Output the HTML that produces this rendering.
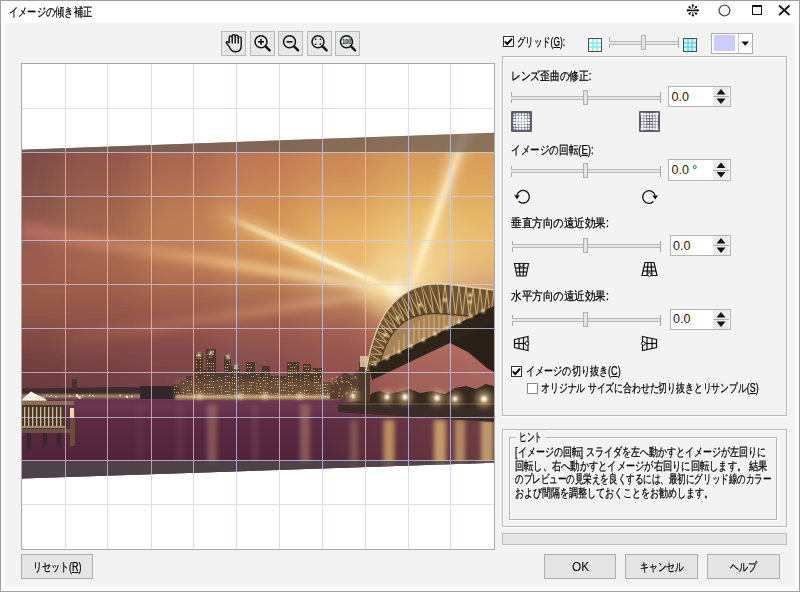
<!DOCTYPE html><html><head><meta charset="utf-8"><style>
*{margin:0;padding:0;box-sizing:border-box}
html,body{width:800px;height:592px;overflow:hidden;background:#fff}
body{position:relative;font-family:"Liberation Sans",sans-serif;font-size:12px;color:#1a1a1a}
.a{position:absolute}
.t{position:absolute;white-space:nowrap;line-height:14px;height:14px;transform-origin:0 50%;-webkit-text-stroke:0.25px currentColor}
.btn{position:absolute;background:#e5e5e5;border:1px solid #adadad}
.chk{position:absolute;width:12px;height:12px;border:1px solid #333;background:#fff}
.spin{position:absolute;background:#fff;border:1px solid #b4b4b4}
u{text-decoration:underline}
</style></head><body><div class="a" style="left:0;top:0;width:800px;height:592px;border:1px solid #a0a0a0;background:#fff"></div>
<div class="a" style="left:5px;top:23px;width:790px;height:564px;background:#f3f3f3"></div>
<div class="t" style="left:9px;top:5px;font-size:12px;color:#000;transform:scaleX(0.77);">イメージの傾き補正</div>
<svg class="a" style="left:680px;top:0" width="120" height="23" viewBox="680 0 120 23">
<g fill="#111" stroke="#111">
<line x1="694.60" y1="10.40" x2="697.80" y2="10.40" stroke-width="1.3"/>
<circle cx="697.80" cy="10.40" r="1.15" stroke="none"/>
<line x1="694.07" y1="11.67" x2="696.05" y2="13.65" stroke-width="0.9"/>
<circle cx="696.05" cy="13.65" r="1.15" stroke="none"/>
<line x1="692.80" y1="12.20" x2="692.80" y2="15.40" stroke-width="0.9"/>
<circle cx="692.80" cy="15.40" r="1.15" stroke="none"/>
<line x1="691.53" y1="11.67" x2="689.55" y2="13.65" stroke-width="0.9"/>
<circle cx="689.55" cy="13.65" r="1.15" stroke="none"/>
<line x1="691.00" y1="10.40" x2="687.80" y2="10.40" stroke-width="1.3"/>
<circle cx="687.80" cy="10.40" r="1.15" stroke="none"/>
<line x1="691.53" y1="9.13" x2="689.55" y2="7.15" stroke-width="0.9"/>
<circle cx="689.55" cy="7.15" r="1.15" stroke="none"/>
<line x1="692.80" y1="8.60" x2="692.80" y2="5.40" stroke-width="0.9"/>
<circle cx="692.80" cy="5.40" r="1.15" stroke="none"/>
<line x1="694.07" y1="9.13" x2="696.05" y2="7.15" stroke-width="0.9"/>
<circle cx="696.05" cy="7.15" r="1.15" stroke="none"/>
<line x1="687.8" y1="10.4" x2="697.8" y2="10.4" stroke-width="1.4"/>
</g>
<circle cx="724.5" cy="10.5" r="5.4" fill="none" stroke="#555" stroke-width="1.4"/>
<rect x="752.5" y="5.5" width="9" height="9" fill="none" stroke="#111" stroke-width="1"/>
<rect x="752" y="5" width="10" height="2" fill="#111"/>
<g stroke="#111" stroke-width="1.7"><line x1="779" y1="5.5" x2="789.5" y2="15"/><line x1="789.5" y1="5.5" x2="779" y2="15"/></g>
</svg>
<div class="btn" style="left:221px;top:31px;width:25px;height:25px;background:#e8e8e8;border-color:#b9b9b9"></div>
<div class="btn" style="left:249.5px;top:31px;width:25px;height:25px;background:#e8e8e8;border-color:#b9b9b9"></div>
<div class="btn" style="left:278px;top:31px;width:25px;height:25px;background:#e8e8e8;border-color:#b9b9b9"></div>
<div class="btn" style="left:306.5px;top:31px;width:25px;height:25px;background:#e8e8e8;border-color:#b9b9b9"></div>
<div class="btn" style="left:335px;top:31px;width:25px;height:25px;background:#e8e8e8;border-color:#b9b9b9"></div>
<svg class="a" style="left:215px;top:25px" width="150" height="35" viewBox="215 25 150 35">
<g fill="none" stroke="#111" stroke-width="1.4" stroke-linecap="round" stroke-linejoin="round">
<path d="M229.2,46.5 L226.8,43.8 Q225.8,42.6 226.8,41.9 Q227.9,41.3 229.2,42.8 L229.2,37.6 Q229.2,35.9 230.7,35.9 Q232.2,35.9 232.2,37.6 L232.2,36.2 Q232.2,34.6 233.7,34.6 Q235.2,34.6 235.2,36.2 L235.2,36.8 Q235.2,35.3 236.7,35.3 Q238.2,35.3 238.2,36.8 L238.2,38.3 Q238.2,36.9 239.7,36.9 Q241.2,36.9 241.2,38.3 L241.2,45.5 Q241.2,51.8 235.4,51.8 Q231.2,51.8 229.2,46.5 Z"/>
<line x1="232.2" y1="37.6" x2="232.2" y2="43"/><line x1="235.2" y1="36.5" x2="235.2" y2="43"/><line x1="238.2" y1="38" x2="238.2" y2="43"/>
</g>
<g fill="none" stroke="#111" stroke-width="1.5">
<circle cx="261" cy="41.8" r="6"/><circle cx="289.5" cy="41.8" r="6"/><circle cx="318" cy="41.8" r="6"/><circle cx="346.5" cy="41.8" r="6"/>
</g>
<g stroke="#111" stroke-width="2.4" stroke-linecap="round">
<line x1="265.6" y1="46.4" x2="269.6" y2="50.4"/><line x1="294.1" y1="46.4" x2="298.1" y2="50.4"/><line x1="322.6" y1="46.4" x2="326.6" y2="50.4"/><line x1="351.1" y1="46.4" x2="355.1" y2="50.4"/>
</g>
<g stroke="#111" stroke-width="1.6"><line x1="258" y1="41.8" x2="264" y2="41.8"/><line x1="261" y1="38.8" x2="261" y2="44.8"/>
<line x1="286.5" y1="41.8" x2="292.5" y2="41.8"/></g>
<g fill="#111"><rect x="314.8" y="38.6" width="1.5" height="1.5"/><rect x="319.7" y="38.6" width="1.5" height="1.5"/><rect x="314.8" y="43.5" width="1.5" height="1.5"/><rect x="319.7" y="43.5" width="1.5" height="1.5"/></g>
<text x="346.8" y="44.2" font-size="6.5" font-weight="bold" text-anchor="middle" fill="#111" font-family="Liberation Sans" textLength="9" lengthAdjust="spacingAndGlyphs">100</text>
</svg>
<div class="a" style="left:21px;top:63px;width:474px;height:487px;border:1px solid #a8a8a8;background:#fff"></div>
<svg class="a" style="left:22px;top:64px" width="472" height="485" viewBox="22 64 472 485">
<defs>
<filter id="sky" x="-20%" y="-20%" width="140%" height="140%"><feGaussianBlur stdDeviation="18"/></filter>
<filter id="b1" x="-50%" y="-50%" width="200%" height="200%"><feGaussianBlur stdDeviation="0.8"/></filter>
<filter id="b2" x="-50%" y="-50%" width="200%" height="200%"><feGaussianBlur stdDeviation="2"/></filter>
<filter id="b3" x="-50%" y="-50%" width="200%" height="200%"><feGaussianBlur stdDeviation="3"/></filter>
<filter id="b4" x="-50%" y="-50%" width="200%" height="200%"><feGaussianBlur stdDeviation="4"/></filter>
<filter id="b5" x="-50%" y="-50%" width="200%" height="200%"><feGaussianBlur stdDeviation="5"/></filter>
<filter id="b8" x="-50%" y="-50%" width="200%" height="200%"><feGaussianBlur stdDeviation="8"/></filter>
<linearGradient id="water" x1="0" y1="396" x2="0" y2="480" gradientUnits="userSpaceOnUse">
 <stop offset="0" stop-color="#62304a"/>
 <stop offset="0.3" stop-color="#5a2a42"/>
 <stop offset="1" stop-color="#4c2238"/>
</linearGradient>
<clipPath id="photoclip"><polygon points="0,150.5 494,132.7 494,462.8 0,479.3"/></clipPath>
</defs>
<g clip-path="url(#photoclip)">
<g filter="url(#sky)">
<rect x="-160" y="40" width="75.5" height="40.5" fill="#7a4a46"/>
<rect x="-85.0" y="40" width="71.5" height="40.5" fill="#7a4a46"/>
<rect x="-14.0" y="40" width="75.5" height="40.5" fill="#7a4a46"/>
<rect x="61.0" y="40" width="79.5" height="40.5" fill="#8c5448"/>
<rect x="140.0" y="40" width="80.5" height="40.5" fill="#a46450"/>
<rect x="220.0" y="40" width="80.5" height="40.5" fill="#bc7452"/>
<rect x="300.0" y="40" width="80.5" height="40.5" fill="#c88456"/>
<rect x="380.0" y="40" width="77.5" height="40.5" fill="#d49458"/>
<rect x="457.0" y="40" width="75.5" height="40.5" fill="#d89a58"/>
<rect x="532.0" y="40" width="73.5" height="40.5" fill="#d89a58"/>
<rect x="605.0" y="40" width="75.5" height="40.5" fill="#d89a58"/>
<rect x="-160" y="80.0" width="75.5" height="40.5" fill="#7a4a46"/>
<rect x="-85.0" y="80.0" width="71.5" height="40.5" fill="#7a4a46"/>
<rect x="-14.0" y="80.0" width="75.5" height="40.5" fill="#7a4a46"/>
<rect x="61.0" y="80.0" width="79.5" height="40.5" fill="#8c5448"/>
<rect x="140.0" y="80.0" width="80.5" height="40.5" fill="#a46450"/>
<rect x="220.0" y="80.0" width="80.5" height="40.5" fill="#bc7452"/>
<rect x="300.0" y="80.0" width="80.5" height="40.5" fill="#c88456"/>
<rect x="380.0" y="80.0" width="77.5" height="40.5" fill="#d49458"/>
<rect x="457.0" y="80.0" width="75.5" height="40.5" fill="#d89a58"/>
<rect x="532.0" y="80.0" width="73.5" height="40.5" fill="#d89a58"/>
<rect x="605.0" y="80.0" width="75.5" height="40.5" fill="#d89a58"/>
<rect x="-160" y="120.0" width="75.5" height="40.5" fill="#7a4a46"/>
<rect x="-85.0" y="120.0" width="71.5" height="40.5" fill="#7a4a46"/>
<rect x="-14.0" y="120.0" width="75.5" height="40.5" fill="#7a4a46"/>
<rect x="61.0" y="120.0" width="79.5" height="40.5" fill="#8c5448"/>
<rect x="140.0" y="120.0" width="80.5" height="40.5" fill="#a46450"/>
<rect x="220.0" y="120.0" width="80.5" height="40.5" fill="#bc7452"/>
<rect x="300.0" y="120.0" width="80.5" height="40.5" fill="#c88456"/>
<rect x="380.0" y="120.0" width="77.5" height="40.5" fill="#d49458"/>
<rect x="457.0" y="120.0" width="75.5" height="40.5" fill="#d89a58"/>
<rect x="532.0" y="120.0" width="73.5" height="40.5" fill="#d89a58"/>
<rect x="605.0" y="120.0" width="75.5" height="40.5" fill="#d89a58"/>
<rect x="-160" y="160.0" width="75.5" height="40.5" fill="#82504a"/>
<rect x="-85.0" y="160.0" width="71.5" height="40.5" fill="#82504a"/>
<rect x="-14.0" y="160.0" width="75.5" height="40.5" fill="#82504a"/>
<rect x="61.0" y="160.0" width="79.5" height="40.5" fill="#965c4c"/>
<rect x="140.0" y="160.0" width="80.5" height="40.5" fill="#b06c52"/>
<rect x="220.0" y="160.0" width="80.5" height="40.5" fill="#c47e56"/>
<rect x="300.0" y="160.0" width="80.5" height="40.5" fill="#d08e58"/>
<rect x="380.0" y="160.0" width="77.5" height="40.5" fill="#dca45c"/>
<rect x="457.0" y="160.0" width="75.5" height="40.5" fill="#dca45c"/>
<rect x="532.0" y="160.0" width="73.5" height="40.5" fill="#dca45c"/>
<rect x="605.0" y="160.0" width="75.5" height="40.5" fill="#dca45c"/>
<rect x="-160" y="200.0" width="75.5" height="40.5" fill="#8e5a4e"/>
<rect x="-85.0" y="200.0" width="71.5" height="40.5" fill="#8e5a4e"/>
<rect x="-14.0" y="200.0" width="75.5" height="40.5" fill="#8e5a4e"/>
<rect x="61.0" y="200.0" width="79.5" height="40.5" fill="#a06650"/>
<rect x="140.0" y="200.0" width="80.5" height="40.5" fill="#c08054"/>
<rect x="220.0" y="200.0" width="80.5" height="40.5" fill="#d49454"/>
<rect x="300.0" y="200.0" width="80.5" height="40.5" fill="#e2ac62"/>
<rect x="380.0" y="200.0" width="77.5" height="40.5" fill="#ecc070"/>
<rect x="457.0" y="200.0" width="75.5" height="40.5" fill="#e6b868"/>
<rect x="532.0" y="200.0" width="73.5" height="40.5" fill="#e6b868"/>
<rect x="605.0" y="200.0" width="75.5" height="40.5" fill="#e6b868"/>
<rect x="-160" y="240.0" width="75.5" height="40.5" fill="#9c5c50"/>
<rect x="-85.0" y="240.0" width="71.5" height="40.5" fill="#9c5c50"/>
<rect x="-14.0" y="240.0" width="75.5" height="40.5" fill="#9c5c50"/>
<rect x="61.0" y="240.0" width="79.5" height="40.5" fill="#a86650"/>
<rect x="140.0" y="240.0" width="80.5" height="40.5" fill="#bc7a54"/>
<rect x="220.0" y="240.0" width="80.5" height="40.5" fill="#d09258"/>
<rect x="300.0" y="240.0" width="80.5" height="40.5" fill="#ecbc70"/>
<rect x="380.0" y="240.0" width="77.5" height="40.5" fill="#f4d490"/>
<rect x="457.0" y="240.0" width="75.5" height="40.5" fill="#eac078"/>
<rect x="532.0" y="240.0" width="73.5" height="40.5" fill="#eac078"/>
<rect x="605.0" y="240.0" width="75.5" height="40.5" fill="#eac078"/>
<rect x="-160" y="280.0" width="75.5" height="40.5" fill="#9a5c4a"/>
<rect x="-85.0" y="280.0" width="71.5" height="40.5" fill="#9a5c4a"/>
<rect x="-14.0" y="280.0" width="75.5" height="40.5" fill="#9a5c4a"/>
<rect x="61.0" y="280.0" width="79.5" height="40.5" fill="#9a5a4a"/>
<rect x="140.0" y="280.0" width="80.5" height="40.5" fill="#a0604e"/>
<rect x="220.0" y="280.0" width="80.5" height="40.5" fill="#a86650"/>
<rect x="300.0" y="280.0" width="80.5" height="40.5" fill="#b87656"/>
<rect x="380.0" y="280.0" width="77.5" height="40.5" fill="#e0b078"/>
<rect x="457.0" y="280.0" width="75.5" height="40.5" fill="#c89070"/>
<rect x="532.0" y="280.0" width="73.5" height="40.5" fill="#c89070"/>
<rect x="605.0" y="280.0" width="75.5" height="40.5" fill="#c89070"/>
<rect x="-160" y="320.0" width="75.5" height="40.5" fill="#7c4642"/>
<rect x="-85.0" y="320.0" width="71.5" height="40.5" fill="#7c4642"/>
<rect x="-14.0" y="320.0" width="75.5" height="40.5" fill="#7c4642"/>
<rect x="61.0" y="320.0" width="79.5" height="40.5" fill="#864c46"/>
<rect x="140.0" y="320.0" width="80.5" height="40.5" fill="#8a4c4c"/>
<rect x="220.0" y="320.0" width="80.5" height="40.5" fill="#925450"/>
<rect x="300.0" y="320.0" width="80.5" height="40.5" fill="#9a5850"/>
<rect x="380.0" y="320.0" width="77.5" height="40.5" fill="#b06a5c"/>
<rect x="457.0" y="320.0" width="75.5" height="40.5" fill="#b06a60"/>
<rect x="532.0" y="320.0" width="73.5" height="40.5" fill="#b06a60"/>
<rect x="605.0" y="320.0" width="75.5" height="40.5" fill="#b06a60"/>
<rect x="-160" y="360.0" width="75.5" height="40.5" fill="#6c3a40"/>
<rect x="-85.0" y="360.0" width="71.5" height="40.5" fill="#6c3a40"/>
<rect x="-14.0" y="360.0" width="75.5" height="40.5" fill="#6c3a40"/>
<rect x="61.0" y="360.0" width="79.5" height="40.5" fill="#703e44"/>
<rect x="140.0" y="360.0" width="80.5" height="40.5" fill="#784248"/>
<rect x="220.0" y="360.0" width="80.5" height="40.5" fill="#804850"/>
<rect x="300.0" y="360.0" width="80.5" height="40.5" fill="#905050"/>
<rect x="380.0" y="360.0" width="77.5" height="40.5" fill="#a06058"/>
<rect x="457.0" y="360.0" width="75.5" height="40.5" fill="#a86460"/>
<rect x="532.0" y="360.0" width="73.5" height="40.5" fill="#a86460"/>
<rect x="605.0" y="360.0" width="75.5" height="40.5" fill="#a86460"/>
<rect x="-160" y="400.0" width="75.5" height="40.5" fill="#6c3a40"/>
<rect x="-85.0" y="400.0" width="71.5" height="40.5" fill="#6c3a40"/>
<rect x="-14.0" y="400.0" width="75.5" height="40.5" fill="#6c3a40"/>
<rect x="61.0" y="400.0" width="79.5" height="40.5" fill="#703e44"/>
<rect x="140.0" y="400.0" width="80.5" height="40.5" fill="#784248"/>
<rect x="220.0" y="400.0" width="80.5" height="40.5" fill="#804850"/>
<rect x="300.0" y="400.0" width="80.5" height="40.5" fill="#905050"/>
<rect x="380.0" y="400.0" width="77.5" height="40.5" fill="#a06058"/>
<rect x="457.0" y="400.0" width="75.5" height="40.5" fill="#a86460"/>
<rect x="532.0" y="400.0" width="73.5" height="40.5" fill="#a86460"/>
<rect x="605.0" y="400.0" width="75.5" height="40.5" fill="#a86460"/>
<rect x="-160" y="440.0" width="75.5" height="40.5" fill="#6c3a40"/>
<rect x="-85.0" y="440.0" width="71.5" height="40.5" fill="#6c3a40"/>
<rect x="-14.0" y="440.0" width="75.5" height="40.5" fill="#6c3a40"/>
<rect x="61.0" y="440.0" width="79.5" height="40.5" fill="#703e44"/>
<rect x="140.0" y="440.0" width="80.5" height="40.5" fill="#784248"/>
<rect x="220.0" y="440.0" width="80.5" height="40.5" fill="#804850"/>
<rect x="300.0" y="440.0" width="80.5" height="40.5" fill="#905050"/>
<rect x="380.0" y="440.0" width="77.5" height="40.5" fill="#a06058"/>
<rect x="457.0" y="440.0" width="75.5" height="40.5" fill="#a86460"/>
<rect x="532.0" y="440.0" width="73.5" height="40.5" fill="#a86460"/>
<rect x="605.0" y="440.0" width="75.5" height="40.5" fill="#a86460"/>
</g>
<linearGradient id="bur" gradientUnits="userSpaceOnUse" x1="409" y1="293" x2="473" y2="108"><stop offset="0" stop-color="#fff4c8" stop-opacity="0.8"/><stop offset="0.5" stop-color="#fff0c0" stop-opacity="0.6"/><stop offset="1" stop-color="#ffe8b0" stop-opacity="0.35"/></linearGradient>
<polygon points="411.4,293.8 482.5,111.3 463.5,104.7 406.6,292.2" fill="url(#bur)" filter="url(#b5)"/>
<linearGradient id="bur2" gradientUnits="userSpaceOnUse" x1="409" y1="293" x2="467" y2="128"><stop offset="0" stop-color="#ffffff" stop-opacity="0.9"/><stop offset="0.6" stop-color="#fff8e0" stop-opacity="0.7"/><stop offset="1" stop-color="#fff0d0" stop-opacity="0.4"/></linearGradient>
<polygon points="409.9,293.3 469.8,129.0 464.2,127.0 408.1,292.7" fill="url(#bur2)" filter="url(#b2)"/>
<linearGradient id="ba" gradientUnits="userSpaceOnUse" x1="396" y1="291" x2="205" y2="207"><stop offset="0" stop-color="#fff4c8" stop-opacity="0.9"/><stop offset="0.6" stop-color="#f8dca0" stop-opacity="0.6"/><stop offset="1" stop-color="#f0c080" stop-opacity="0"/></linearGradient>
<polygon points="397.4,287.8 209.4,196.9 200.6,217.1 394.6,294.2" fill="url(#ba)" filter="url(#b4)"/>
<linearGradient id="ba2" gradientUnits="userSpaceOnUse" x1="396" y1="291" x2="225" y2="216"><stop offset="0" stop-color="#ffffff" stop-opacity="0.95"/><stop offset="0.5" stop-color="#fff4c8" stop-opacity="0.8"/><stop offset="0.85" stop-color="#fff0c0" stop-opacity="0.45"/><stop offset="1" stop-color="#fff0c8" stop-opacity="0"/></linearGradient>
<polygon points="396.6,289.6 226.4,212.8 223.6,219.2 395.4,292.4" fill="url(#ba2)" filter="url(#b1)"/>
<linearGradient id="bb" gradientUnits="userSpaceOnUse" x1="396" y1="291" x2="22" y2="230"><stop offset="0" stop-color="#fff0c0" stop-opacity="0.7"/><stop offset="0.35" stop-color="#f8d08a" stop-opacity="0.6"/><stop offset="0.65" stop-color="#e8a070" stop-opacity="0.45"/><stop offset="1" stop-color="#d07870" stop-opacity="0.5"/></linearGradient>
<polygon points="396.5,288.0 23.3,222.1 20.7,237.9 395.5,294.0" fill="url(#bb)" filter="url(#b4)"/>
<linearGradient id="bb2" gradientUnits="userSpaceOnUse" x1="396" y1="291" x2="140" y2="248"><stop offset="0" stop-color="#fff8e0" stop-opacity="0.6"/><stop offset="0.6" stop-color="#f8e0a0" stop-opacity="0.35"/><stop offset="1" stop-color="#f0c080" stop-opacity="0"/></linearGradient>
<polygon points="396.2,290.0 140.7,244.1 139.3,251.9 395.8,292.0" fill="url(#bb2)" filter="url(#b3)"/>
<linearGradient id="bc" gradientUnits="userSpaceOnUse" x1="396" y1="291" x2="22" y2="346"><stop offset="0" stop-color="#fff0c0" stop-opacity="0.6"/><stop offset="0.4" stop-color="#f0b070" stop-opacity="0.35"/><stop offset="1" stop-color="#c07060" stop-opacity="0"/></linearGradient>
<polygon points="395.7,289.0 20.8,338.1 23.2,353.9 396.3,293.0" fill="url(#bc)" filter="url(#b4)"/>
<ellipse cx="398" cy="285" rx="40" ry="30" fill="#fae0a0" opacity="0.55" filter="url(#b8)"/>
<circle cx="398" cy="291" r="10" fill="#fff8e0" opacity="0.85" filter="url(#b5)"/>
<rect x="0" y="396" width="500" height="90" fill="url(#water)"/>
<rect x="0" y="400" width="360" height="14" fill="#8a4a6a" opacity="0.3" filter="url(#b4)"/>
<rect x="300.0" y="404" width="10" height="60" fill="#c08870" opacity="0.5" filter="url(#b2)"/>
<rect x="207.0" y="404" width="10" height="60" fill="#c08870" opacity="0.45" filter="url(#b2)"/>
<rect x="251.5" y="404" width="7" height="60" fill="#a06070" opacity="0.25" filter="url(#b2)"/>
<rect x="350.0" y="420" width="8" height="60" fill="#c09070" opacity="0.4" filter="url(#b2)"/>
<rect x="177.0" y="404" width="6" height="60" fill="#a06070" opacity="0.2" filter="url(#b2)"/>
<rect x="383.5" y="420" width="11" height="60" fill="#f0c070" opacity="0.75" filter="url(#b2)"/>
<rect x="434.0" y="420" width="12" height="60" fill="#f8d080" opacity="0.85" filter="url(#b2)"/>
<rect x="455.0" y="420" width="10" height="60" fill="#f8d080" opacity="0.75" filter="url(#b2)"/>
<rect x="481.0" y="420" width="12" height="60" fill="#f8d890" opacity="0.9" filter="url(#b2)"/>
<rect x="136.0" y="404" width="8" height="60" fill="#a06070" opacity="0.12" filter="url(#b2)"/>
<linearGradient id="wr" gradientUnits="userSpaceOnUse" x1="300" y1="0" x2="494" y2="0"><stop offset="0" stop-color="#8a5a48" stop-opacity="0"/><stop offset="1" stop-color="#8a5a48" stop-opacity="0.45"/></linearGradient>
<rect x="300" y="405" width="200" height="80" fill="url(#wr)"/>
<polygon points="0,389 60,388 120,387 175,388 180,398 0,399" fill="#3e2a30"/>
<rect x="72" y="379" width="5" height="10" fill="#4a3030"/>
<rect x="0" y="395" width="200" height="3" fill="#d0b090" opacity="0.45" filter="url(#b1)"/>
<rect x="0" y="394" width="494" height="4" fill="#e8c890" opacity="0.35" filter="url(#b1)"/>
<circle cx="174.2" cy="395.5" r="1.1" fill="#fff0c0" opacity="0.8"/>
<circle cx="56.0" cy="396.6" r="0.9" fill="#fff0c0" opacity="0.8"/>
<circle cx="49.3" cy="396.5" r="0.6" fill="#fff0c0" opacity="0.8"/>
<circle cx="225.8" cy="395.2" r="0.7" fill="#fff0c0" opacity="0.8"/>
<circle cx="221.5" cy="397.5" r="0.7" fill="#fff0c0" opacity="0.8"/>
<circle cx="126.9" cy="396.9" r="1.4" fill="#fff0c0" opacity="0.8"/>
<circle cx="293.2" cy="396.2" r="1.4" fill="#fff0c0" opacity="0.8"/>
<circle cx="43.9" cy="397.6" r="0.8" fill="#fff0c0" opacity="0.8"/>
<circle cx="89.8" cy="395.4" r="0.8" fill="#fff0c0" opacity="0.8"/>
<circle cx="405.6" cy="395.5" r="1.1" fill="#fff0c0" opacity="0.8"/>
<circle cx="322.3" cy="396.1" r="1.0" fill="#fff0c0" opacity="0.8"/>
<circle cx="51.5" cy="395.2" r="0.8" fill="#fff0c0" opacity="0.8"/>
<circle cx="341.8" cy="396.3" r="0.9" fill="#fff0c0" opacity="0.8"/>
<circle cx="297.2" cy="396.4" r="0.8" fill="#fff0c0" opacity="0.8"/>
<circle cx="395.4" cy="397.1" r="0.8" fill="#fff0c0" opacity="0.8"/>
<circle cx="292.0" cy="396.6" r="1.3" fill="#fff0c0" opacity="0.8"/>
<circle cx="364.8" cy="395.9" r="1.4" fill="#fff0c0" opacity="0.8"/>
<circle cx="77.5" cy="396.3" r="1.2" fill="#fff0c0" opacity="0.8"/>
<circle cx="93.4" cy="396.5" r="0.6" fill="#fff0c0" opacity="0.8"/>
<circle cx="336.1" cy="397.3" r="1.1" fill="#fff0c0" opacity="0.8"/>
<circle cx="433.5" cy="395.9" r="1.2" fill="#fff0c0" opacity="0.8"/>
<circle cx="301.4" cy="396.7" r="1.0" fill="#fff0c0" opacity="0.8"/>
<circle cx="416.8" cy="397.8" r="1.0" fill="#fff0c0" opacity="0.8"/>
<circle cx="334.2" cy="395.2" r="1.2" fill="#fff0c0" opacity="0.8"/>
<circle cx="326.2" cy="398.0" r="1.3" fill="#fff0c0" opacity="0.8"/>
<circle cx="155.8" cy="396.2" r="1.1" fill="#fff0c0" opacity="0.8"/>
<circle cx="32.6" cy="396.4" r="0.7" fill="#fff0c0" opacity="0.8"/>
<circle cx="77.0" cy="395.2" r="1.2" fill="#fff0c0" opacity="0.8"/>
<circle cx="82.8" cy="395.7" r="0.9" fill="#fff0c0" opacity="0.8"/>
<circle cx="431.6" cy="395.2" r="1.0" fill="#fff0c0" opacity="0.8"/>
<circle cx="280.2" cy="397.7" r="1.3" fill="#fff0c0" opacity="0.8"/>
<circle cx="428.1" cy="395.8" r="0.9" fill="#fff0c0" opacity="0.8"/>
<circle cx="190.6" cy="397.7" r="1.4" fill="#fff0c0" opacity="0.8"/>
<circle cx="92.9" cy="395.5" r="0.8" fill="#fff0c0" opacity="0.8"/>
<circle cx="131.7" cy="396.5" r="1.1" fill="#fff0c0" opacity="0.8"/>
<circle cx="145.5" cy="395.0" r="0.9" fill="#fff0c0" opacity="0.8"/>
<circle cx="195.5" cy="396.7" r="1.4" fill="#fff0c0" opacity="0.8"/>
<circle cx="346.5" cy="396.5" r="1.1" fill="#fff0c0" opacity="0.8"/>
<circle cx="339.8" cy="395.2" r="1.3" fill="#fff0c0" opacity="0.8"/>
<circle cx="388.6" cy="397.6" r="1.2" fill="#fff0c0" opacity="0.8"/>
<circle cx="206.4" cy="396.2" r="0.7" fill="#fff0c0" opacity="0.8"/>
<circle cx="320.1" cy="395.2" r="0.7" fill="#fff0c0" opacity="0.8"/>
<circle cx="120.1" cy="395.5" r="0.9" fill="#fff0c0" opacity="0.8"/>
<circle cx="46.7" cy="395.0" r="0.7" fill="#fff0c0" opacity="0.8"/>
<circle cx="69.7" cy="396.1" r="0.6" fill="#fff0c0" opacity="0.8"/>
<circle cx="432.9" cy="396.8" r="0.7" fill="#fff0c0" opacity="0.8"/>
<circle cx="140.6" cy="396.0" r="0.9" fill="#fff0c0" opacity="0.8"/>
<circle cx="79.7" cy="397.5" r="1.4" fill="#fff0c0" opacity="0.8"/>
<circle cx="241.0" cy="396.5" r="0.7" fill="#fff0c0" opacity="0.8"/>
<circle cx="70.0" cy="396.0" r="0.8" fill="#fff0c0" opacity="0.8"/>
<circle cx="411.6" cy="395.5" r="0.6" fill="#fff0c0" opacity="0.8"/>
<circle cx="469.0" cy="396.6" r="0.7" fill="#fff0c0" opacity="0.8"/>
<circle cx="277.3" cy="395.1" r="1.0" fill="#fff0c0" opacity="0.8"/>
<circle cx="481.9" cy="397.6" r="1.2" fill="#fff0c0" opacity="0.8"/>
<circle cx="144.7" cy="396.1" r="0.7" fill="#fff0c0" opacity="0.8"/>
<circle cx="384.8" cy="396.6" r="1.2" fill="#fff0c0" opacity="0.8"/>
<circle cx="176.9" cy="395.7" r="1.2" fill="#fff0c0" opacity="0.8"/>
<circle cx="484.9" cy="397.6" r="1.2" fill="#fff0c0" opacity="0.8"/>
<circle cx="406.6" cy="397.2" r="0.8" fill="#fff0c0" opacity="0.8"/>
<circle cx="265.3" cy="396.1" r="0.6" fill="#fff0c0" opacity="0.8"/>
<rect x="173" y="384" width="7" height="15" fill="#4e382a"/>
<rect x="180" y="381" width="6" height="18" fill="#4e382a"/>
<rect x="186" y="376" width="8" height="23" fill="#4e382a"/>
<rect x="195" y="353" width="8" height="46" fill="#4e382a"/>
<rect x="203" y="370" width="3" height="29" fill="#4e382a"/>
<rect x="206" y="349" width="10" height="50" fill="#4e382a"/>
<rect x="216" y="372" width="8" height="27" fill="#4e382a"/>
<rect x="224" y="356" width="7" height="43" fill="#4e382a"/>
<rect x="231" y="366" width="9" height="33" fill="#4e382a"/>
<rect x="240" y="374" width="6" height="25" fill="#4e382a"/>
<rect x="246" y="362" width="9" height="37" fill="#4e382a"/>
<rect x="255" y="372" width="7" height="27" fill="#4e382a"/>
<rect x="262" y="366" width="8" height="33" fill="#4e382a"/>
<rect x="270" y="376" width="17" height="23" fill="#4e382a"/>
<rect x="287" y="362" width="12" height="37" fill="#4e382a"/>
<rect x="299" y="372" width="4" height="27" fill="#4e382a"/>
<rect x="303" y="364" width="8" height="35" fill="#4e382a"/>
<rect x="311" y="374" width="2" height="25" fill="#4e382a"/>
<rect x="313" y="368" width="9" height="31" fill="#4e382a"/>
<rect x="322" y="382" width="10" height="17" fill="#4e382a"/>
<rect x="140" y="386" width="40" height="13" fill="#33262a"/>
<g fill="#f8d890">
<rect x="174" y="386" width="1" height="1" opacity="0.64"/>
<rect x="176" y="386" width="1" height="1" opacity="0.85"/>
<rect x="174" y="389" width="1" height="1" opacity="0.97"/>
<rect x="174" y="392" width="1" height="1" opacity="0.61"/>
<rect x="176" y="392" width="1" height="1" opacity="0.60"/>
<rect x="178" y="392" width="1" height="1" opacity="0.81"/>
<rect x="178" y="395" width="1" height="1" opacity="0.83"/>
<rect x="183" y="383" width="1" height="1" opacity="0.83"/>
<rect x="183" y="389" width="1" height="1" opacity="0.59"/>
<rect x="183" y="392" width="1" height="1" opacity="0.90"/>
<rect x="183" y="395" width="1" height="1" opacity="0.70"/>
<rect x="191" y="378" width="1" height="1" opacity="0.56"/>
<rect x="187" y="381" width="1" height="1" opacity="0.95"/>
<rect x="191" y="381" width="1" height="1" opacity="0.91"/>
<rect x="191" y="384" width="1" height="1" opacity="0.77"/>
<rect x="187" y="387" width="1" height="1" opacity="0.51"/>
<rect x="187" y="390" width="1" height="1" opacity="0.97"/>
<rect x="189" y="390" width="1" height="1" opacity="0.94"/>
<rect x="187" y="393" width="1" height="1" opacity="0.63"/>
<rect x="189" y="393" width="1" height="1" opacity="0.62"/>
<rect x="191" y="393" width="1" height="1" opacity="0.63"/>
<rect x="187" y="396" width="1" height="1" opacity="0.57"/>
<rect x="191" y="396" width="1" height="1" opacity="0.73"/>
<rect x="196" y="355" width="1" height="1" opacity="0.95"/>
<rect x="198" y="355" width="1" height="1" opacity="0.96"/>
<rect x="200" y="355" width="1" height="1" opacity="0.77"/>
<rect x="196" y="358" width="1" height="1" opacity="0.51"/>
<rect x="198" y="358" width="1" height="1" opacity="0.59"/>
<rect x="200" y="358" width="1" height="1" opacity="0.90"/>
<rect x="196" y="361" width="1" height="1" opacity="0.74"/>
<rect x="200" y="361" width="1" height="1" opacity="0.66"/>
<rect x="196" y="364" width="1" height="1" opacity="0.78"/>
<rect x="200" y="364" width="1" height="1" opacity="0.78"/>
<rect x="196" y="367" width="1" height="1" opacity="0.64"/>
<rect x="200" y="367" width="1" height="1" opacity="0.78"/>
<rect x="200" y="370" width="1" height="1" opacity="0.81"/>
<rect x="196" y="373" width="1" height="1" opacity="0.76"/>
<rect x="200" y="373" width="1" height="1" opacity="0.77"/>
<rect x="196" y="376" width="1" height="1" opacity="0.97"/>
<rect x="198" y="379" width="1" height="1" opacity="0.78"/>
<rect x="198" y="382" width="1" height="1" opacity="0.56"/>
<rect x="200" y="382" width="1" height="1" opacity="0.54"/>
<rect x="196" y="385" width="1" height="1" opacity="0.54"/>
<rect x="198" y="388" width="1" height="1" opacity="0.86"/>
<rect x="196" y="391" width="1" height="1" opacity="0.94"/>
<rect x="200" y="391" width="1" height="1" opacity="0.98"/>
<rect x="196" y="394" width="1" height="1" opacity="0.74"/>
<rect x="204" y="372" width="1" height="1" opacity="0.72"/>
<rect x="204" y="375" width="1" height="1" opacity="0.67"/>
<rect x="204" y="378" width="1" height="1" opacity="0.66"/>
<rect x="204" y="384" width="1" height="1" opacity="0.78"/>
<rect x="204" y="387" width="1" height="1" opacity="0.51"/>
<rect x="204" y="390" width="1" height="1" opacity="0.81"/>
<rect x="204" y="393" width="1" height="1" opacity="0.53"/>
<rect x="211" y="351" width="1" height="1" opacity="0.63"/>
<rect x="213" y="351" width="1" height="1" opacity="0.89"/>
<rect x="207" y="354" width="1" height="1" opacity="0.56"/>
<rect x="209" y="354" width="1" height="1" opacity="0.96"/>
<rect x="213" y="354" width="1" height="1" opacity="0.57"/>
<rect x="209" y="357" width="1" height="1" opacity="0.85"/>
<rect x="211" y="357" width="1" height="1" opacity="0.53"/>
<rect x="207" y="360" width="1" height="1" opacity="0.54"/>
<rect x="207" y="363" width="1" height="1" opacity="0.93"/>
<rect x="209" y="363" width="1" height="1" opacity="0.93"/>
<rect x="211" y="363" width="1" height="1" opacity="0.67"/>
<rect x="213" y="363" width="1" height="1" opacity="0.96"/>
<rect x="207" y="366" width="1" height="1" opacity="0.56"/>
<rect x="209" y="366" width="1" height="1" opacity="0.62"/>
<rect x="211" y="366" width="1" height="1" opacity="0.58"/>
<rect x="213" y="366" width="1" height="1" opacity="0.60"/>
<rect x="207" y="369" width="1" height="1" opacity="0.65"/>
<rect x="211" y="369" width="1" height="1" opacity="0.75"/>
<rect x="213" y="369" width="1" height="1" opacity="0.67"/>
<rect x="207" y="372" width="1" height="1" opacity="0.63"/>
<rect x="209" y="372" width="1" height="1" opacity="0.87"/>
<rect x="211" y="372" width="1" height="1" opacity="0.59"/>
<rect x="213" y="372" width="1" height="1" opacity="0.97"/>
<rect x="207" y="375" width="1" height="1" opacity="0.91"/>
<rect x="209" y="375" width="1" height="1" opacity="0.75"/>
<rect x="213" y="375" width="1" height="1" opacity="0.75"/>
<rect x="211" y="378" width="1" height="1" opacity="0.92"/>
<rect x="209" y="381" width="1" height="1" opacity="0.67"/>
<rect x="211" y="381" width="1" height="1" opacity="0.56"/>
<rect x="213" y="381" width="1" height="1" opacity="0.87"/>
<rect x="207" y="384" width="1" height="1" opacity="0.58"/>
<rect x="209" y="384" width="1" height="1" opacity="0.92"/>
<rect x="207" y="387" width="1" height="1" opacity="0.62"/>
<rect x="209" y="387" width="1" height="1" opacity="0.73"/>
<rect x="211" y="387" width="1" height="1" opacity="0.72"/>
<rect x="213" y="387" width="1" height="1" opacity="0.98"/>
<rect x="209" y="390" width="1" height="1" opacity="0.62"/>
<rect x="213" y="390" width="1" height="1" opacity="0.68"/>
<rect x="207" y="393" width="1" height="1" opacity="0.69"/>
<rect x="209" y="393" width="1" height="1" opacity="0.75"/>
<rect x="211" y="393" width="1" height="1" opacity="0.75"/>
<rect x="213" y="393" width="1" height="1" opacity="0.63"/>
<rect x="207" y="396" width="1" height="1" opacity="0.70"/>
<rect x="209" y="396" width="1" height="1" opacity="0.51"/>
<rect x="211" y="396" width="1" height="1" opacity="0.62"/>
<rect x="213" y="396" width="1" height="1" opacity="0.76"/>
<rect x="219" y="377" width="1" height="1" opacity="0.66"/>
<rect x="217" y="380" width="1" height="1" opacity="0.86"/>
<rect x="221" y="380" width="1" height="1" opacity="0.92"/>
<rect x="219" y="386" width="1" height="1" opacity="0.76"/>
<rect x="221" y="386" width="1" height="1" opacity="0.92"/>
<rect x="221" y="389" width="1" height="1" opacity="0.95"/>
<rect x="221" y="392" width="1" height="1" opacity="0.52"/>
<rect x="217" y="395" width="1" height="1" opacity="0.68"/>
<rect x="219" y="395" width="1" height="1" opacity="0.92"/>
<rect x="221" y="395" width="1" height="1" opacity="0.81"/>
<rect x="229" y="358" width="1" height="1" opacity="0.50"/>
<rect x="229" y="361" width="1" height="1" opacity="0.77"/>
<rect x="227" y="364" width="1" height="1" opacity="0.87"/>
<rect x="229" y="364" width="1" height="1" opacity="0.54"/>
<rect x="225" y="367" width="1" height="1" opacity="0.86"/>
<rect x="227" y="367" width="1" height="1" opacity="0.87"/>
<rect x="225" y="370" width="1" height="1" opacity="0.69"/>
<rect x="227" y="370" width="1" height="1" opacity="0.84"/>
<rect x="229" y="373" width="1" height="1" opacity="0.57"/>
<rect x="225" y="376" width="1" height="1" opacity="0.87"/>
<rect x="227" y="376" width="1" height="1" opacity="0.78"/>
<rect x="229" y="376" width="1" height="1" opacity="0.53"/>
<rect x="225" y="379" width="1" height="1" opacity="0.84"/>
<rect x="225" y="382" width="1" height="1" opacity="0.76"/>
<rect x="227" y="382" width="1" height="1" opacity="0.73"/>
<rect x="229" y="382" width="1" height="1" opacity="0.95"/>
<rect x="225" y="385" width="1" height="1" opacity="0.99"/>
<rect x="229" y="385" width="1" height="1" opacity="0.73"/>
<rect x="229" y="388" width="1" height="1" opacity="0.63"/>
<rect x="225" y="391" width="1" height="1" opacity="0.97"/>
<rect x="227" y="391" width="1" height="1" opacity="0.79"/>
<rect x="229" y="391" width="1" height="1" opacity="0.76"/>
<rect x="227" y="394" width="1" height="1" opacity="0.91"/>
<rect x="229" y="394" width="1" height="1" opacity="0.94"/>
<rect x="234" y="368" width="1" height="1" opacity="0.95"/>
<rect x="236" y="368" width="1" height="1" opacity="0.51"/>
<rect x="238" y="368" width="1" height="1" opacity="0.75"/>
<rect x="232" y="371" width="1" height="1" opacity="0.65"/>
<rect x="234" y="371" width="1" height="1" opacity="0.67"/>
<rect x="236" y="371" width="1" height="1" opacity="0.92"/>
<rect x="238" y="371" width="1" height="1" opacity="0.88"/>
<rect x="234" y="374" width="1" height="1" opacity="0.96"/>
<rect x="232" y="377" width="1" height="1" opacity="0.69"/>
<rect x="234" y="377" width="1" height="1" opacity="1.00"/>
<rect x="236" y="377" width="1" height="1" opacity="0.68"/>
<rect x="238" y="377" width="1" height="1" opacity="0.64"/>
<rect x="232" y="380" width="1" height="1" opacity="0.55"/>
<rect x="236" y="380" width="1" height="1" opacity="0.97"/>
<rect x="238" y="380" width="1" height="1" opacity="0.63"/>
<rect x="232" y="383" width="1" height="1" opacity="0.59"/>
<rect x="234" y="383" width="1" height="1" opacity="0.98"/>
<rect x="238" y="386" width="1" height="1" opacity="0.86"/>
<rect x="232" y="389" width="1" height="1" opacity="0.87"/>
<rect x="234" y="389" width="1" height="1" opacity="0.88"/>
<rect x="238" y="389" width="1" height="1" opacity="0.52"/>
<rect x="234" y="392" width="1" height="1" opacity="0.74"/>
<rect x="236" y="392" width="1" height="1" opacity="0.65"/>
<rect x="234" y="395" width="1" height="1" opacity="0.83"/>
<rect x="236" y="395" width="1" height="1" opacity="0.78"/>
<rect x="238" y="395" width="1" height="1" opacity="0.58"/>
<rect x="241" y="376" width="1" height="1" opacity="0.60"/>
<rect x="241" y="379" width="1" height="1" opacity="0.61"/>
<rect x="243" y="382" width="1" height="1" opacity="0.57"/>
<rect x="241" y="385" width="1" height="1" opacity="0.55"/>
<rect x="243" y="385" width="1" height="1" opacity="0.55"/>
<rect x="241" y="388" width="1" height="1" opacity="0.63"/>
<rect x="243" y="388" width="1" height="1" opacity="0.94"/>
<rect x="243" y="391" width="1" height="1" opacity="0.71"/>
<rect x="241" y="394" width="1" height="1" opacity="0.69"/>
<rect x="243" y="394" width="1" height="1" opacity="0.53"/>
<rect x="247" y="364" width="1" height="1" opacity="0.98"/>
<rect x="249" y="364" width="1" height="1" opacity="0.75"/>
<rect x="247" y="367" width="1" height="1" opacity="0.64"/>
<rect x="249" y="367" width="1" height="1" opacity="0.70"/>
<rect x="251" y="367" width="1" height="1" opacity="0.98"/>
<rect x="249" y="370" width="1" height="1" opacity="0.52"/>
<rect x="247" y="373" width="1" height="1" opacity="0.79"/>
<rect x="249" y="373" width="1" height="1" opacity="0.70"/>
<rect x="251" y="376" width="1" height="1" opacity="0.55"/>
<rect x="253" y="376" width="1" height="1" opacity="0.76"/>
<rect x="249" y="382" width="1" height="1" opacity="0.78"/>
<rect x="251" y="382" width="1" height="1" opacity="0.89"/>
<rect x="253" y="382" width="1" height="1" opacity="0.96"/>
<rect x="249" y="385" width="1" height="1" opacity="0.56"/>
<rect x="251" y="385" width="1" height="1" opacity="0.82"/>
<rect x="247" y="388" width="1" height="1" opacity="0.54"/>
<rect x="249" y="388" width="1" height="1" opacity="0.79"/>
<rect x="251" y="388" width="1" height="1" opacity="0.61"/>
<rect x="247" y="391" width="1" height="1" opacity="0.65"/>
<rect x="249" y="391" width="1" height="1" opacity="0.98"/>
<rect x="247" y="394" width="1" height="1" opacity="0.62"/>
<rect x="249" y="394" width="1" height="1" opacity="0.98"/>
<rect x="253" y="394" width="1" height="1" opacity="0.51"/>
<rect x="256" y="374" width="1" height="1" opacity="0.84"/>
<rect x="258" y="374" width="1" height="1" opacity="0.63"/>
<rect x="258" y="377" width="1" height="1" opacity="0.52"/>
<rect x="260" y="377" width="1" height="1" opacity="0.71"/>
<rect x="258" y="380" width="1" height="1" opacity="0.90"/>
<rect x="256" y="383" width="1" height="1" opacity="0.60"/>
<rect x="260" y="383" width="1" height="1" opacity="0.91"/>
<rect x="256" y="386" width="1" height="1" opacity="0.61"/>
<rect x="260" y="386" width="1" height="1" opacity="0.98"/>
<rect x="256" y="389" width="1" height="1" opacity="0.59"/>
<rect x="258" y="389" width="1" height="1" opacity="0.71"/>
<rect x="258" y="392" width="1" height="1" opacity="0.70"/>
<rect x="260" y="392" width="1" height="1" opacity="0.99"/>
<rect x="256" y="395" width="1" height="1" opacity="0.53"/>
<rect x="258" y="395" width="1" height="1" opacity="0.70"/>
<rect x="265" y="371" width="1" height="1" opacity="0.59"/>
<rect x="265" y="374" width="1" height="1" opacity="0.83"/>
<rect x="267" y="374" width="1" height="1" opacity="0.69"/>
<rect x="263" y="377" width="1" height="1" opacity="0.58"/>
<rect x="265" y="377" width="1" height="1" opacity="0.64"/>
<rect x="267" y="377" width="1" height="1" opacity="0.98"/>
<rect x="263" y="380" width="1" height="1" opacity="0.98"/>
<rect x="265" y="380" width="1" height="1" opacity="0.68"/>
<rect x="265" y="383" width="1" height="1" opacity="0.52"/>
<rect x="267" y="383" width="1" height="1" opacity="0.69"/>
<rect x="265" y="386" width="1" height="1" opacity="0.68"/>
<rect x="263" y="389" width="1" height="1" opacity="0.71"/>
<rect x="263" y="392" width="1" height="1" opacity="0.52"/>
<rect x="265" y="392" width="1" height="1" opacity="0.96"/>
<rect x="267" y="392" width="1" height="1" opacity="0.87"/>
<rect x="265" y="395" width="1" height="1" opacity="0.64"/>
<rect x="273" y="378" width="1" height="1" opacity="0.86"/>
<rect x="275" y="378" width="1" height="1" opacity="0.64"/>
<rect x="277" y="378" width="1" height="1" opacity="0.88"/>
<rect x="285" y="378" width="1" height="1" opacity="0.62"/>
<rect x="271" y="381" width="1" height="1" opacity="0.98"/>
<rect x="275" y="381" width="1" height="1" opacity="0.63"/>
<rect x="277" y="381" width="1" height="1" opacity="0.75"/>
<rect x="281" y="381" width="1" height="1" opacity="0.90"/>
<rect x="275" y="384" width="1" height="1" opacity="0.66"/>
<rect x="277" y="384" width="1" height="1" opacity="0.89"/>
<rect x="279" y="384" width="1" height="1" opacity="0.60"/>
<rect x="283" y="384" width="1" height="1" opacity="0.53"/>
<rect x="285" y="384" width="1" height="1" opacity="0.78"/>
<rect x="271" y="387" width="1" height="1" opacity="0.99"/>
<rect x="277" y="387" width="1" height="1" opacity="0.54"/>
<rect x="279" y="387" width="1" height="1" opacity="0.75"/>
<rect x="283" y="387" width="1" height="1" opacity="0.62"/>
<rect x="285" y="387" width="1" height="1" opacity="0.81"/>
<rect x="279" y="390" width="1" height="1" opacity="0.92"/>
<rect x="281" y="390" width="1" height="1" opacity="0.78"/>
<rect x="283" y="390" width="1" height="1" opacity="0.87"/>
<rect x="285" y="390" width="1" height="1" opacity="0.62"/>
<rect x="271" y="393" width="1" height="1" opacity="0.58"/>
<rect x="275" y="393" width="1" height="1" opacity="0.66"/>
<rect x="277" y="393" width="1" height="1" opacity="1.00"/>
<rect x="279" y="393" width="1" height="1" opacity="0.62"/>
<rect x="271" y="396" width="1" height="1" opacity="0.74"/>
<rect x="279" y="396" width="1" height="1" opacity="0.65"/>
<rect x="281" y="396" width="1" height="1" opacity="0.59"/>
<rect x="285" y="396" width="1" height="1" opacity="0.97"/>
<rect x="288" y="364" width="1" height="1" opacity="0.93"/>
<rect x="290" y="364" width="1" height="1" opacity="0.63"/>
<rect x="296" y="364" width="1" height="1" opacity="0.80"/>
<rect x="290" y="367" width="1" height="1" opacity="0.68"/>
<rect x="292" y="367" width="1" height="1" opacity="0.60"/>
<rect x="294" y="367" width="1" height="1" opacity="0.80"/>
<rect x="288" y="370" width="1" height="1" opacity="0.51"/>
<rect x="290" y="370" width="1" height="1" opacity="0.84"/>
<rect x="292" y="370" width="1" height="1" opacity="0.66"/>
<rect x="294" y="370" width="1" height="1" opacity="0.90"/>
<rect x="296" y="370" width="1" height="1" opacity="0.53"/>
<rect x="288" y="373" width="1" height="1" opacity="0.70"/>
<rect x="290" y="373" width="1" height="1" opacity="0.82"/>
<rect x="292" y="373" width="1" height="1" opacity="0.58"/>
<rect x="296" y="373" width="1" height="1" opacity="0.64"/>
<rect x="288" y="376" width="1" height="1" opacity="0.98"/>
<rect x="290" y="376" width="1" height="1" opacity="0.78"/>
<rect x="292" y="376" width="1" height="1" opacity="0.71"/>
<rect x="288" y="379" width="1" height="1" opacity="0.60"/>
<rect x="292" y="379" width="1" height="1" opacity="0.50"/>
<rect x="296" y="379" width="1" height="1" opacity="0.91"/>
<rect x="288" y="382" width="1" height="1" opacity="0.94"/>
<rect x="290" y="382" width="1" height="1" opacity="0.58"/>
<rect x="292" y="382" width="1" height="1" opacity="0.78"/>
<rect x="288" y="385" width="1" height="1" opacity="0.81"/>
<rect x="290" y="385" width="1" height="1" opacity="0.75"/>
<rect x="292" y="385" width="1" height="1" opacity="0.64"/>
<rect x="294" y="385" width="1" height="1" opacity="0.96"/>
<rect x="296" y="385" width="1" height="1" opacity="0.75"/>
<rect x="292" y="388" width="1" height="1" opacity="0.56"/>
<rect x="288" y="391" width="1" height="1" opacity="0.53"/>
<rect x="292" y="391" width="1" height="1" opacity="0.95"/>
<rect x="288" y="394" width="1" height="1" opacity="0.89"/>
<rect x="290" y="394" width="1" height="1" opacity="0.70"/>
<rect x="296" y="394" width="1" height="1" opacity="0.61"/>
<rect x="300" y="374" width="1" height="1" opacity="0.76"/>
<rect x="300" y="377" width="1" height="1" opacity="0.56"/>
<rect x="300" y="380" width="1" height="1" opacity="0.86"/>
<rect x="300" y="386" width="1" height="1" opacity="0.78"/>
<rect x="300" y="392" width="1" height="1" opacity="0.92"/>
<rect x="300" y="395" width="1" height="1" opacity="0.80"/>
<rect x="304" y="366" width="1" height="1" opacity="0.81"/>
<rect x="306" y="366" width="1" height="1" opacity="0.71"/>
<rect x="308" y="366" width="1" height="1" opacity="0.71"/>
<rect x="306" y="369" width="1" height="1" opacity="0.72"/>
<rect x="308" y="369" width="1" height="1" opacity="0.81"/>
<rect x="304" y="372" width="1" height="1" opacity="0.62"/>
<rect x="304" y="375" width="1" height="1" opacity="0.59"/>
<rect x="306" y="375" width="1" height="1" opacity="0.55"/>
<rect x="308" y="375" width="1" height="1" opacity="0.72"/>
<rect x="304" y="378" width="1" height="1" opacity="0.72"/>
<rect x="306" y="378" width="1" height="1" opacity="0.52"/>
<rect x="304" y="381" width="1" height="1" opacity="0.87"/>
<rect x="308" y="381" width="1" height="1" opacity="0.53"/>
<rect x="304" y="384" width="1" height="1" opacity="0.69"/>
<rect x="308" y="384" width="1" height="1" opacity="0.93"/>
<rect x="304" y="390" width="1" height="1" opacity="0.99"/>
<rect x="306" y="390" width="1" height="1" opacity="0.98"/>
<rect x="304" y="393" width="1" height="1" opacity="0.89"/>
<rect x="308" y="393" width="1" height="1" opacity="0.68"/>
<rect x="306" y="396" width="1" height="1" opacity="0.95"/>
<rect x="308" y="396" width="1" height="1" opacity="0.91"/>
<rect x="314" y="370" width="1" height="1" opacity="0.75"/>
<rect x="318" y="370" width="1" height="1" opacity="0.63"/>
<rect x="320" y="370" width="1" height="1" opacity="0.66"/>
<rect x="314" y="373" width="1" height="1" opacity="0.59"/>
<rect x="316" y="373" width="1" height="1" opacity="0.97"/>
<rect x="314" y="376" width="1" height="1" opacity="0.89"/>
<rect x="316" y="376" width="1" height="1" opacity="0.77"/>
<rect x="320" y="376" width="1" height="1" opacity="0.94"/>
<rect x="314" y="379" width="1" height="1" opacity="0.79"/>
<rect x="318" y="379" width="1" height="1" opacity="1.00"/>
<rect x="314" y="382" width="1" height="1" opacity="0.90"/>
<rect x="316" y="382" width="1" height="1" opacity="1.00"/>
<rect x="318" y="382" width="1" height="1" opacity="0.68"/>
<rect x="314" y="385" width="1" height="1" opacity="0.59"/>
<rect x="318" y="385" width="1" height="1" opacity="0.91"/>
<rect x="320" y="385" width="1" height="1" opacity="0.82"/>
<rect x="316" y="388" width="1" height="1" opacity="0.83"/>
<rect x="318" y="388" width="1" height="1" opacity="0.50"/>
<rect x="320" y="388" width="1" height="1" opacity="0.57"/>
<rect x="316" y="391" width="1" height="1" opacity="0.76"/>
<rect x="320" y="391" width="1" height="1" opacity="0.61"/>
<rect x="316" y="394" width="1" height="1" opacity="0.50"/>
<rect x="318" y="394" width="1" height="1" opacity="0.55"/>
<rect x="320" y="394" width="1" height="1" opacity="0.61"/>
<rect x="323" y="384" width="1" height="1" opacity="0.79"/>
<rect x="325" y="384" width="1" height="1" opacity="0.81"/>
<rect x="327" y="384" width="1" height="1" opacity="0.57"/>
<rect x="323" y="387" width="1" height="1" opacity="0.57"/>
<rect x="325" y="387" width="1" height="1" opacity="0.82"/>
<rect x="323" y="390" width="1" height="1" opacity="0.63"/>
<rect x="325" y="390" width="1" height="1" opacity="0.82"/>
<rect x="327" y="390" width="1" height="1" opacity="0.68"/>
<rect x="323" y="393" width="1" height="1" opacity="0.97"/>
<rect x="327" y="393" width="1" height="1" opacity="0.95"/>
<rect x="329" y="393" width="1" height="1" opacity="0.77"/>
<rect x="323" y="396" width="1" height="1" opacity="0.62"/>
<rect x="325" y="396" width="1" height="1" opacity="0.89"/>
<rect x="327" y="396" width="1" height="1" opacity="0.78"/>
</g>
<rect x="175" y="380" width="160" height="18" fill="#f0c080" opacity="0.18" filter="url(#b3)"/>
<circle cx="211" cy="353" r="2" fill="#fff0c0" opacity="0.9" filter="url(#b1)"/>
<circle cx="228" cy="357" r="2" fill="#fff0c0" opacity="0.9" filter="url(#b1)"/>
<circle cx="199" cy="355" r="2" fill="#fff0c0" opacity="0.9" filter="url(#b1)"/>
<circle cx="236" cy="367" r="2" fill="#fff0c0" opacity="0.9" filter="url(#b1)"/>
<rect x="175" y="395" width="165" height="4" fill="#f0d090" opacity="0.7" filter="url(#b1)"/>
<circle cx="200" cy="396" r="3" fill="#fff0c0" opacity="0.8" filter="url(#b2)"/>
<circle cx="240" cy="396" r="3" fill="#fff0c0" opacity="0.8" filter="url(#b2)"/>
<circle cx="265" cy="396" r="3" fill="#fff0c0" opacity="0.8" filter="url(#b2)"/>
<circle cx="300" cy="396" r="3" fill="#fff0c0" opacity="0.8" filter="url(#b2)"/>
<circle cx="352" cy="396" r="3" fill="#fff0c0" opacity="0.8" filter="url(#b2)"/>
<polygon points="330,399 331,382 338,378 345,372 352,376 358,370 366,380 366,400" fill="#5a4030"/>
<g fill="#f8d890">
<rect x="335.7" y="380.4" width="1.2" height="1.2" opacity="0.8"/>
<rect x="351.1" y="387.2" width="1.2" height="1.2" opacity="0.8"/>
<rect x="352.2" y="393.9" width="1.2" height="1.2" opacity="0.8"/>
<rect x="336.8" y="382.8" width="1.2" height="1.2" opacity="0.8"/>
<rect x="340.9" y="377.1" width="1.2" height="1.2" opacity="0.8"/>
<rect x="360.3" y="393.2" width="1.2" height="1.2" opacity="0.8"/>
<rect x="354.6" y="376.1" width="1.2" height="1.2" opacity="0.8"/>
<rect x="358.9" y="392.4" width="1.2" height="1.2" opacity="0.8"/>
<rect x="346.4" y="392.3" width="1.2" height="1.2" opacity="0.8"/>
<rect x="345.9" y="381.0" width="1.2" height="1.2" opacity="0.8"/>
<rect x="334.5" y="381.1" width="1.2" height="1.2" opacity="0.8"/>
<rect x="332.3" y="383.4" width="1.2" height="1.2" opacity="0.8"/>
<rect x="355.7" y="391.3" width="1.2" height="1.2" opacity="0.8"/>
<rect x="358.9" y="391.7" width="1.2" height="1.2" opacity="0.8"/>
<rect x="339.8" y="388.2" width="1.2" height="1.2" opacity="0.8"/>
<rect x="345.4" y="393.3" width="1.2" height="1.2" opacity="0.8"/>
<rect x="348.3" y="381.8" width="1.2" height="1.2" opacity="0.8"/>
<rect x="352.2" y="397.2" width="1.2" height="1.2" opacity="0.8"/>
<rect x="338.2" y="395.4" width="1.2" height="1.2" opacity="0.8"/>
<rect x="331.5" y="381.7" width="1.2" height="1.2" opacity="0.8"/>
<rect x="338.8" y="392.4" width="1.2" height="1.2" opacity="0.8"/>
<rect x="362.2" y="392.4" width="1.2" height="1.2" opacity="0.8"/>
<rect x="341.8" y="395.4" width="1.2" height="1.2" opacity="0.8"/>
<rect x="341.8" y="381.3" width="1.2" height="1.2" opacity="0.8"/>
<rect x="360.9" y="389.9" width="1.2" height="1.2" opacity="0.8"/>
<rect x="353.9" y="390.6" width="1.2" height="1.2" opacity="0.8"/>
<rect x="363.3" y="386.3" width="1.2" height="1.2" opacity="0.8"/>
<rect x="358.7" y="391.3" width="1.2" height="1.2" opacity="0.8"/>
<rect x="359.3" y="385.6" width="1.2" height="1.2" opacity="0.8"/>
<rect x="354.9" y="388.5" width="1.2" height="1.2" opacity="0.8"/>
<rect x="341.2" y="380.7" width="1.2" height="1.2" opacity="0.8"/>
<rect x="351.5" y="377.7" width="1.2" height="1.2" opacity="0.8"/>
<rect x="361.1" y="379.2" width="1.2" height="1.2" opacity="0.8"/>
<rect x="331.9" y="378.3" width="1.2" height="1.2" opacity="0.8"/>
<rect x="361.7" y="383.6" width="1.2" height="1.2" opacity="0.8"/>
<rect x="335.7" y="376.6" width="1.2" height="1.2" opacity="0.8"/>
<rect x="332.4" y="391.2" width="1.2" height="1.2" opacity="0.8"/>
<rect x="351.9" y="391.3" width="1.2" height="1.2" opacity="0.8"/>
<rect x="355.3" y="377.4" width="1.2" height="1.2" opacity="0.8"/>
<rect x="350.5" y="384.0" width="1.2" height="1.2" opacity="0.8"/>
</g>
<path d="M366,400 L372,393 380,391 388,394 398,392 410,389 420,393 432,391 445,394 455,388 466,386 476,389 486,384 494,386 L494,421 L338,412 L338,404 Z" fill="#34281f"/>
<polygon points="338,404 494,408 494,422 338,412" fill="#3a2c26"/>
<rect x="338" y="403" width="156" height="2" fill="#6a5040" opacity="0.6"/>
<rect x="359" y="362" width="11" height="40" fill="#4a3a2c"/>
<rect x="360" y="356" width="8" height="11" fill="#e0c8a0" opacity="0.85"/>
<path d="M378,371 C386,333 402,310 445,314 L494,318 L494,306 L372,366 Z" fill="#a88458"/>
<g stroke="#e0b878" stroke-width="1.2" opacity="0.8">
<line x1="389" y1="353.5" x2="389" y2="357.8"/>
<line x1="394" y1="346.5" x2="394" y2="355.3"/>
<line x1="399" y1="340.1" x2="399" y2="352.9"/>
<line x1="404" y1="334.2" x2="404" y2="350.5"/>
<line x1="409" y1="329.1" x2="409" y2="348.1"/>
<line x1="414" y1="324.6" x2="414" y2="345.6"/>
<line x1="419" y1="320.8" x2="419" y2="343.2"/>
<line x1="424" y1="317.8" x2="424" y2="340.8"/>
<line x1="429" y1="315.6" x2="429" y2="338.4"/>
<line x1="434" y1="314.2" x2="434" y2="335.9"/>
<line x1="439" y1="313.6" x2="439" y2="333.5"/>
<line x1="444" y1="313.8" x2="444" y2="331.1"/>
<line x1="449" y1="316.2" x2="449" y2="328.7"/>
<line x1="454" y1="316.4" x2="454" y2="326.2"/>
<line x1="459" y1="316.6" x2="459" y2="323.8"/>
<line x1="464" y1="316.8" x2="464" y2="321.4"/>
<line x1="469" y1="317.0" x2="469" y2="319.0"/>
</g>
<polygon points="440,338 494,314 494,372 487,368 468,352" fill="#2a2018"/>
<path d="M366,371 C374,325 390,286 438,283 L494,290 L494,318 L445,314 C402,310 386,333 378,371 Z" fill="#6e5434"/>
<g stroke="#e0bc78" stroke-width="1.1" opacity="0.8">
<line x1="366.0" y1="371.0" x2="378.8" y2="367.5"/><line x1="378.8" y1="367.5" x2="367.6" y2="362.5"/>
<line x1="367.6" y1="362.5" x2="380.5" y2="360.7"/><line x1="380.5" y1="360.7" x2="369.4" y2="354.1"/>
<line x1="369.4" y1="354.1" x2="382.4" y2="354.3"/><line x1="382.4" y1="354.3" x2="371.5" y2="346.1"/>
<line x1="371.5" y1="346.1" x2="384.6" y2="348.3"/><line x1="384.6" y1="348.3" x2="373.9" y2="338.3"/>
<line x1="373.9" y1="338.3" x2="387.1" y2="342.8"/><line x1="387.1" y1="342.8" x2="376.6" y2="330.8"/>
<line x1="376.6" y1="330.8" x2="389.9" y2="337.6"/><line x1="389.9" y1="337.6" x2="379.6" y2="323.7"/>
<line x1="379.6" y1="323.7" x2="393.0" y2="332.9"/><line x1="393.0" y1="332.9" x2="383.1" y2="317.1"/>
<line x1="383.1" y1="317.1" x2="396.5" y2="328.7"/><line x1="396.5" y1="328.7" x2="387.0" y2="310.9"/>
<line x1="387.0" y1="310.9" x2="400.4" y2="324.9"/><line x1="400.4" y1="324.9" x2="391.4" y2="305.2"/>
<line x1="391.4" y1="305.2" x2="404.7" y2="321.7"/><line x1="404.7" y1="321.7" x2="396.2" y2="300.0"/>
<line x1="396.2" y1="300.0" x2="409.5" y2="319.0"/><line x1="409.5" y1="319.0" x2="401.6" y2="295.5"/>
<line x1="401.6" y1="295.5" x2="414.7" y2="316.8"/><line x1="414.7" y1="316.8" x2="407.6" y2="291.5"/>
<line x1="407.6" y1="291.5" x2="420.5" y2="315.1"/><line x1="420.5" y1="315.1" x2="414.2" y2="288.3"/>
<line x1="414.2" y1="288.3" x2="426.7" y2="314.1"/><line x1="426.7" y1="314.1" x2="421.5" y2="285.8"/>
<line x1="421.5" y1="285.8" x2="433.6" y2="313.6"/><line x1="433.6" y1="313.6" x2="429.4" y2="284.0"/>
<line x1="429.4" y1="284.0" x2="441.0" y2="313.7"/><line x1="441.0" y1="313.7" x2="438.0" y2="283.0"/>
<line x1="438.0" y1="283.0" x2="441.5" y2="315.0"/><line x1="441.5" y1="315.0" x2="445.0" y2="283.9"/>
<line x1="445.0" y1="283.9" x2="448.5" y2="315.5"/><line x1="448.5" y1="315.5" x2="452.0" y2="284.7"/>
<line x1="452.0" y1="284.7" x2="455.5" y2="316.0"/><line x1="455.5" y1="316.0" x2="459.0" y2="285.6"/>
<line x1="459.0" y1="285.6" x2="462.5" y2="316.5"/><line x1="462.5" y1="316.5" x2="466.0" y2="286.4"/>
<line x1="466.0" y1="286.4" x2="469.5" y2="317.0"/><line x1="469.5" y1="317.0" x2="473.0" y2="287.2"/>
<line x1="473.0" y1="287.2" x2="476.5" y2="317.5"/><line x1="476.5" y1="317.5" x2="480.0" y2="288.1"/>
<line x1="480.0" y1="288.1" x2="483.5" y2="318.0"/><line x1="483.5" y1="318.0" x2="487.0" y2="288.9"/>
<line x1="487.0" y1="288.9" x2="490.5" y2="318.5"/><line x1="490.5" y1="318.5" x2="494.0" y2="289.8"/>
</g>
<g stroke="#3a2a18" stroke-width="0.8" opacity="0.6">
<line x1="366.0" y1="371.0" x2="378.0" y2="371.0"/>
<line x1="367.6" y1="362.5" x2="379.6" y2="364.1"/>
<line x1="369.4" y1="354.1" x2="381.4" y2="357.5"/>
<line x1="371.5" y1="346.1" x2="383.5" y2="351.3"/>
<line x1="373.9" y1="338.3" x2="385.8" y2="345.5"/>
<line x1="376.6" y1="330.8" x2="388.4" y2="340.1"/>
<line x1="379.6" y1="323.7" x2="391.4" y2="335.2"/>
<line x1="383.1" y1="317.1" x2="394.7" y2="330.7"/>
<line x1="387.0" y1="310.9" x2="398.4" y2="326.8"/>
<line x1="391.4" y1="305.2" x2="402.5" y2="323.2"/>
<line x1="396.2" y1="300.0" x2="407.0" y2="320.3"/>
<line x1="401.6" y1="295.5" x2="412.0" y2="317.8"/>
<line x1="407.6" y1="291.5" x2="417.5" y2="315.9"/>
<line x1="414.2" y1="288.3" x2="423.5" y2="314.5"/>
<line x1="421.5" y1="285.8" x2="430.1" y2="313.7"/>
<line x1="429.4" y1="284.0" x2="437.2" y2="313.6"/>
<line x1="438.0" y1="283.0" x2="445.0" y2="314.0"/>
</g>
<path d="M366,371 C374,325 390,286 438,283 L494,290" fill="none" stroke="#f0d8a8" stroke-width="1.3" opacity="0.85"/>
<path d="M378,371 C386,333 402,310 445,314 L494,318" fill="none" stroke="#4a3620" stroke-width="1.5" opacity="0.8"/>
<polygon points="369,367 494,306 494,322 372,380" fill="#2e2418"/>
<g fill="#fff4c0" filter="url(#b1)">
<circle cx="375" cy="364" r="1.8"/>
<circle cx="387" cy="358" r="1.8"/>
<circle cx="399" cy="352" r="1.8"/>
<circle cx="411" cy="346" r="1.8"/>
<circle cx="423" cy="340" r="1.8"/>
<circle cx="435" cy="334" r="1.8"/>
<circle cx="447" cy="328" r="1.8"/>
<circle cx="459" cy="322" r="1.8"/>
<circle cx="471" cy="316" r="1.8"/>
<circle cx="483" cy="311" r="1.8"/>
<circle cx="420" cy="305" r="1.8"/>
<circle cx="445" cy="300" r="1.8"/>
<circle cx="470" cy="302" r="1.8"/>
<circle cx="385" cy="335" r="1.8"/>
<circle cx="398" cy="318" r="1.8"/>
<circle cx="470" cy="295" r="1.8"/>
</g>
<circle cx="353" cy="396" r="5.6000000000000005" fill="#ffd890" opacity="0.6" filter="url(#b3)"/><circle cx="353" cy="396" r="2.1" fill="#fffae8" filter="url(#b1)"/>
<circle cx="387" cy="397" r="6.4" fill="#ffd890" opacity="0.6" filter="url(#b3)"/><circle cx="387" cy="397" r="2.4" fill="#fffae8" filter="url(#b1)"/>
<circle cx="405" cy="397" r="7.2" fill="#ffd890" opacity="0.6" filter="url(#b3)"/><circle cx="405" cy="397" r="2.6999999999999997" fill="#fffae8" filter="url(#b1)"/>
<circle cx="437" cy="398" r="7.2" fill="#ffd890" opacity="0.6" filter="url(#b3)"/><circle cx="437" cy="398" r="2.6999999999999997" fill="#fffae8" filter="url(#b1)"/>
<circle cx="455" cy="399" r="6.4" fill="#ffd890" opacity="0.6" filter="url(#b3)"/><circle cx="455" cy="399" r="2.4" fill="#fffae8" filter="url(#b1)"/>
<circle cx="484" cy="399" r="8.0" fill="#ffd890" opacity="0.6" filter="url(#b3)"/><circle cx="484" cy="399" r="3.0" fill="#fffae8" filter="url(#b1)"/>
<polygon points="21,400 31,391.5 47,400" fill="#f4f0e4"/>
<polygon points="21,400 47,400 45,402 21,402" fill="#c8b8a0"/>
<rect x="22" y="401" width="52" height="4" fill="#8a6c58"/>
<rect x="22" y="405" width="43" height="25" fill="#4a3630"/>
<g fill="#e8d4a8">
<rect x="24" y="407" width="1.3" height="19" opacity="0.85"/>
<rect x="28" y="407" width="1.3" height="19" opacity="0.85"/>
<rect x="32" y="407" width="1.3" height="19" opacity="0.85"/>
<rect x="36" y="407" width="1.3" height="19" opacity="0.85"/>
<rect x="40" y="407" width="1.3" height="19" opacity="0.85"/>
<rect x="44" y="407" width="1.3" height="19" opacity="0.85"/>
<rect x="48" y="407" width="1.3" height="19" opacity="0.85"/>
<rect x="52" y="407" width="1.3" height="19" opacity="0.85"/>
<rect x="56" y="407" width="1.3" height="19" opacity="0.85"/>
<rect x="60" y="407" width="1.3" height="19" opacity="0.85"/>
</g>
<rect x="22" y="426" width="43" height="2" fill="#e0c898" opacity="0.6"/>
<rect x="22" y="429" width="50" height="4" fill="#6a5048"/>
<rect x="27" y="433" width="4" height="16" fill="#3a2830"/><rect x="43" y="433" width="4" height="13" fill="#3a2830"/><rect x="57" y="433" width="4" height="13" fill="#3a2830"/>
<rect x="70" y="412" width="5" height="34" fill="#6a4c40"/><rect x="70" y="408" width="4" height="10" fill="#f0d8a0"/>
</g>
<polygon points="0,150.5 494,132.7 494,152 0,152" fill="#6a6058" opacity="0.7"/>
<polygon points="0,460.5 494,460.5 494,462.8 0,479.3" fill="#4e4a4e" opacity="0.8"/>
<g stroke="#d0d0f4" stroke-width="1" opacity="0.7">
<line x1="65.5" y1="64" x2="65.5" y2="549"/>
<line x1="107.5" y1="64" x2="107.5" y2="549"/>
<line x1="151.5" y1="64" x2="151.5" y2="549"/>
<line x1="193.5" y1="64" x2="193.5" y2="549"/>
<line x1="236.5" y1="64" x2="236.5" y2="549"/>
<line x1="279.5" y1="64" x2="279.5" y2="549"/>
<line x1="322.5" y1="64" x2="322.5" y2="549"/>
<line x1="365.5" y1="64" x2="365.5" y2="549"/>
<line x1="408.5" y1="64" x2="408.5" y2="549"/>
<line x1="450.5" y1="64" x2="450.5" y2="549"/>
<line x1="22" y1="108.5" x2="494" y2="108.5"/>
<line x1="22" y1="152.5" x2="494" y2="152.5"/>
<line x1="22" y1="196.5" x2="494" y2="196.5"/>
<line x1="22" y1="240.5" x2="494" y2="240.5"/>
<line x1="22" y1="284.5" x2="494" y2="284.5"/>
<line x1="22" y1="328.5" x2="494" y2="328.5"/>
<line x1="22" y1="372.5" x2="494" y2="372.5"/>
<line x1="22" y1="417.5" x2="494" y2="417.5"/>
<line x1="22" y1="460.5" x2="494" y2="460.5"/>
<line x1="22" y1="504.5" x2="494" y2="504.5"/>
</g>
</svg>
<div class="chk" style="left:503px;top:36px;width:11px;height:11px;border-color:#333"></div>
<svg class="a" style="left:503px;top:36px" width="11" height="11"><path d="M1.8,5.4 L4.3,8 L9,2.6" fill="none" stroke="#000" stroke-width="2"/></svg>
<div class="t" style="left:517px;top:35px;font-size:12px;color:#000;transform:scaleX(0.7);">グリッド(<u>G</u>):</div>
<svg class="a" style="left:588px;top:38px" width="14" height="14" viewBox="0 0 14 14"><rect x="0.5" y="0.5" width="13" height="13" fill="#fff"/><line x1="5" y1="1" x2="5" y2="13" stroke="#7ef0f0" stroke-width="1.6"/><line x1="1" y1="5" x2="13" y2="5" stroke="#7ef0f0" stroke-width="1.6"/><line x1="9" y1="1" x2="9" y2="13" stroke="#7ef0f0" stroke-width="1.6"/><line x1="1" y1="9" x2="13" y2="9" stroke="#7ef0f0" stroke-width="1.6"/><rect x="0.5" y="0.5" width="13" height="13" fill="none" stroke="#4a4c5c" stroke-width="1"/></svg>
<svg class="a" style="left:683px;top:38px" width="14" height="14" viewBox="0 0 14 14"><rect x="0.5" y="0.5" width="13" height="13" fill="#9af6f6"/><line x1="3" y1="1" x2="3" y2="13" stroke="#e8ffff" stroke-width="0.8"/><line x1="1" y1="3" x2="13" y2="3" stroke="#e8ffff" stroke-width="0.8"/><line x1="7" y1="1" x2="7" y2="13" stroke="#e8ffff" stroke-width="0.8"/><line x1="1" y1="7" x2="13" y2="7" stroke="#e8ffff" stroke-width="0.8"/><line x1="11" y1="1" x2="11" y2="13" stroke="#e8ffff" stroke-width="0.8"/><line x1="1" y1="11" x2="13" y2="11" stroke="#e8ffff" stroke-width="0.8"/><line x1="5" y1="1" x2="5" y2="13" stroke="#60c8c8" stroke-width="1"/><line x1="1" y1="5" x2="13" y2="5" stroke="#60c8c8" stroke-width="1"/><line x1="9" y1="1" x2="9" y2="13" stroke="#60c8c8" stroke-width="1"/><line x1="1" y1="9" x2="13" y2="9" stroke="#60c8c8" stroke-width="1"/><rect x="0.5" y="0.5" width="13" height="13" fill="none" stroke="#4a4c5c" stroke-width="1"/></svg>
<div class="a" style="left:608.5px;top:37px;width:1px;height:11px;background:#a8a8a8"></div>
<div class="a" style="left:677.5px;top:37px;width:1px;height:11px;background:#a8a8a8"></div>
<div class="a" style="left:608.5px;top:40.5px;width:69.0px;height:4px;border-top:1px solid #b8b8b8;border-bottom:1px solid #b8b8b8;background:#e6e6e6"></div>
<div class="a" style="left:640.5px;top:34.5px;width:5px;height:15px;background:#e4e4e4;border:1px solid #b0b0b0"></div>
<div class="a" style="left:711px;top:33px;width:42px;height:21px;background:#fff;border:1px solid #adadad"></div>
<div class="a" style="left:713.5px;top:35px;width:21.5px;height:15.5px;background:#ccccff"></div>
<div class="a" style="left:738px;top:34px;width:1px;height:19px;background:#c8c8c8"></div>
<svg class="a" style="left:741px;top:41px" width="9" height="6"><path d="M0.5,0.5 L8,0.5 L4.25,4.8 Z" fill="#111"/></svg>
<div class="a" style="left:502px;top:56px;width:285px;height:360px;border:1px solid #b8b8b8;box-shadow:inset 1px 1px 0 #fff,1px 1px 0 #fff"></div>
<div class="t" style="left:510.5px;top:68.5px;font-size:12px;color:#000;transform:scaleX(0.81);">レンズ歪曲の修正:</div>
<div class="a" style="left:510.5px;top:92px;width:1px;height:11px;background:#a8a8a8"></div>
<div class="a" style="left:660px;top:92px;width:1px;height:11px;background:#a8a8a8"></div>
<div class="a" style="left:510.5px;top:95.5px;width:149.5px;height:4px;border-top:1px solid #b8b8b8;border-bottom:1px solid #b8b8b8;background:#e6e6e6"></div>
<div class="a" style="left:583px;top:89.5px;width:5px;height:15px;background:#e4e4e4;border:1px solid #b0b0b0"></div>
<div class="spin" style="left:668px;top:86px;width:63px;height:21px"></div>
<div class="a" style="left:713px;top:87px;width:16px;height:19px;background:#ececec"></div>
<div class="a" style="left:713px;top:96.0px;width:16px;height:1px;background:#b0b0b0"></div>
<svg class="a" style="left:715px;top:86px" width="12" height="21"><path d="M1.5,8.5 L10.5,8.5 L6,3.0 Z" fill="#111"/><path d="M1.5,12.5 L10.5,12.5 L6,18.0 Z" fill="#111"/></svg>
<div class="t" style="left:671.5px;top:89.5px;font-size:12.5px;color:#1a1a1a;transform:scaleX(1.0);-webkit-text-stroke:0;">0.0</div>
<svg class="a" style="left:511px;top:111px" width="21" height="21" viewBox="0 0 21 21"><rect x="0" y="0" width="21" height="21" rx="1" fill="#5c5c72"/><rect x="2.54" y="2.54" width="1.90" height="1.90" rx="0.5" fill="#fff"/><rect x="2.29" y="5.13" width="2.22" height="2.22" rx="0.5" fill="#fff"/><rect x="2.16" y="7.88" width="2.38" height="2.38" rx="0.5" fill="#fff"/><rect x="2.16" y="10.74" width="2.38" height="2.38" rx="0.5" fill="#fff"/><rect x="2.29" y="13.65" width="2.22" height="2.22" rx="0.5" fill="#fff"/><rect x="2.54" y="16.56" width="1.90" height="1.90" rx="0.5" fill="#fff"/><rect x="5.13" y="2.29" width="2.22" height="2.22" rx="0.5" fill="#fff"/><rect x="4.91" y="4.91" width="2.54" height="2.54" rx="0.5" fill="#fff"/><rect x="4.81" y="7.70" width="2.70" height="2.70" rx="0.5" fill="#fff"/><rect x="4.81" y="10.60" width="2.70" height="2.70" rx="0.5" fill="#fff"/><rect x="4.91" y="13.55" width="2.54" height="2.54" rx="0.5" fill="#fff"/><rect x="5.13" y="16.49" width="2.22" height="2.22" rx="0.5" fill="#fff"/><rect x="7.88" y="2.16" width="2.38" height="2.38" rx="0.5" fill="#fff"/><rect x="7.70" y="4.81" width="2.70" height="2.70" rx="0.5" fill="#fff"/><rect x="7.61" y="7.61" width="2.86" height="2.86" rx="0.5" fill="#fff"/><rect x="7.61" y="10.53" width="2.86" height="2.86" rx="0.5" fill="#fff"/><rect x="7.70" y="13.49" width="2.70" height="2.70" rx="0.5" fill="#fff"/><rect x="7.88" y="16.46" width="2.38" height="2.38" rx="0.5" fill="#fff"/><rect x="10.74" y="2.16" width="2.38" height="2.38" rx="0.5" fill="#fff"/><rect x="10.60" y="4.81" width="2.70" height="2.70" rx="0.5" fill="#fff"/><rect x="10.53" y="7.61" width="2.86" height="2.86" rx="0.5" fill="#fff"/><rect x="10.53" y="10.53" width="2.86" height="2.86" rx="0.5" fill="#fff"/><rect x="10.60" y="13.49" width="2.70" height="2.70" rx="0.5" fill="#fff"/><rect x="10.74" y="16.46" width="2.38" height="2.38" rx="0.5" fill="#fff"/><rect x="13.65" y="2.29" width="2.22" height="2.22" rx="0.5" fill="#fff"/><rect x="13.55" y="4.91" width="2.54" height="2.54" rx="0.5" fill="#fff"/><rect x="13.49" y="7.70" width="2.70" height="2.70" rx="0.5" fill="#fff"/><rect x="13.49" y="10.60" width="2.70" height="2.70" rx="0.5" fill="#fff"/><rect x="13.55" y="13.55" width="2.54" height="2.54" rx="0.5" fill="#fff"/><rect x="13.65" y="16.49" width="2.22" height="2.22" rx="0.5" fill="#fff"/><rect x="16.56" y="2.54" width="1.90" height="1.90" rx="0.5" fill="#fff"/><rect x="16.49" y="5.13" width="2.22" height="2.22" rx="0.5" fill="#fff"/><rect x="16.46" y="7.88" width="2.38" height="2.38" rx="0.5" fill="#fff"/><rect x="16.46" y="10.74" width="2.38" height="2.38" rx="0.5" fill="#fff"/><rect x="16.49" y="13.65" width="2.22" height="2.22" rx="0.5" fill="#fff"/><rect x="16.56" y="16.56" width="1.90" height="1.90" rx="0.5" fill="#fff"/></svg>
<svg class="a" style="left:639px;top:111px" width="21" height="21" viewBox="0 0 21 21"><rect x="0" y="0" width="21" height="21" rx="1" fill="#5c5c72"/><rect x="1.75" y="1.75" width="2.90" height="2.90" rx="0.5" fill="#fff"/><rect x="2.03" y="4.90" width="2.58" height="2.58" rx="0.5" fill="#fff"/><rect x="2.17" y="7.87" width="2.42" height="2.42" rx="0.5" fill="#fff"/><rect x="2.17" y="10.71" width="2.42" height="2.42" rx="0.5" fill="#fff"/><rect x="2.03" y="13.52" width="2.58" height="2.58" rx="0.5" fill="#fff"/><rect x="1.75" y="16.35" width="2.90" height="2.90" rx="0.5" fill="#fff"/><rect x="4.90" y="2.03" width="2.58" height="2.58" rx="0.5" fill="#fff"/><rect x="5.13" y="5.13" width="2.26" height="2.26" rx="0.5" fill="#fff"/><rect x="5.25" y="8.05" width="2.10" height="2.10" rx="0.5" fill="#fff"/><rect x="5.25" y="10.85" width="2.10" height="2.10" rx="0.5" fill="#fff"/><rect x="5.13" y="13.61" width="2.26" height="2.26" rx="0.5" fill="#fff"/><rect x="4.90" y="16.39" width="2.58" height="2.58" rx="0.5" fill="#fff"/><rect x="7.87" y="2.17" width="2.42" height="2.42" rx="0.5" fill="#fff"/><rect x="8.05" y="5.25" width="2.10" height="2.10" rx="0.5" fill="#fff"/><rect x="8.14" y="8.14" width="1.94" height="1.94" rx="0.5" fill="#fff"/><rect x="8.14" y="10.92" width="1.94" height="1.94" rx="0.5" fill="#fff"/><rect x="8.05" y="13.65" width="2.10" height="2.10" rx="0.5" fill="#fff"/><rect x="7.87" y="16.41" width="2.42" height="2.42" rx="0.5" fill="#fff"/><rect x="10.71" y="2.17" width="2.42" height="2.42" rx="0.5" fill="#fff"/><rect x="10.85" y="5.25" width="2.10" height="2.10" rx="0.5" fill="#fff"/><rect x="10.92" y="8.14" width="1.94" height="1.94" rx="0.5" fill="#fff"/><rect x="10.92" y="10.92" width="1.94" height="1.94" rx="0.5" fill="#fff"/><rect x="10.85" y="13.65" width="2.10" height="2.10" rx="0.5" fill="#fff"/><rect x="10.71" y="16.41" width="2.42" height="2.42" rx="0.5" fill="#fff"/><rect x="13.52" y="2.03" width="2.58" height="2.58" rx="0.5" fill="#fff"/><rect x="13.61" y="5.13" width="2.26" height="2.26" rx="0.5" fill="#fff"/><rect x="13.65" y="8.05" width="2.10" height="2.10" rx="0.5" fill="#fff"/><rect x="13.65" y="10.85" width="2.10" height="2.10" rx="0.5" fill="#fff"/><rect x="13.61" y="13.61" width="2.26" height="2.26" rx="0.5" fill="#fff"/><rect x="13.52" y="16.39" width="2.58" height="2.58" rx="0.5" fill="#fff"/><rect x="16.35" y="1.75" width="2.90" height="2.90" rx="0.5" fill="#fff"/><rect x="16.39" y="4.90" width="2.58" height="2.58" rx="0.5" fill="#fff"/><rect x="16.41" y="7.87" width="2.42" height="2.42" rx="0.5" fill="#fff"/><rect x="16.41" y="10.71" width="2.42" height="2.42" rx="0.5" fill="#fff"/><rect x="16.39" y="13.52" width="2.58" height="2.58" rx="0.5" fill="#fff"/><rect x="16.35" y="16.35" width="2.90" height="2.90" rx="0.5" fill="#fff"/></svg>
<div class="t" style="left:510.5px;top:143px;font-size:12px;color:#000;transform:scaleX(0.8);">イメージの回転(<u>E</u>):</div>
<div class="a" style="left:510.5px;top:165.5px;width:1px;height:11px;background:#a8a8a8"></div>
<div class="a" style="left:660px;top:165.5px;width:1px;height:11px;background:#a8a8a8"></div>
<div class="a" style="left:510.5px;top:169.0px;width:149.5px;height:4px;border-top:1px solid #b8b8b8;border-bottom:1px solid #b8b8b8;background:#e6e6e6"></div>
<div class="a" style="left:583px;top:163.0px;width:5px;height:15px;background:#e4e4e4;border:1px solid #b0b0b0"></div>
<div class="spin" style="left:668px;top:159px;width:63px;height:22px"></div>
<div class="a" style="left:713px;top:160px;width:16px;height:20px;background:#ececec"></div>
<div class="a" style="left:713px;top:169.5px;width:16px;height:1px;background:#b0b0b0"></div>
<svg class="a" style="left:715px;top:159px" width="12" height="22"><path d="M1.5,9.0 L10.5,9.0 L6,3.5 Z" fill="#111"/><path d="M1.5,13.0 L10.5,13.0 L6,18.5 Z" fill="#111"/></svg>
<div class="t" style="left:671.5px;top:163.0px;font-size:12.5px;color:#1a1a1a;transform:scaleX(1.0);-webkit-text-stroke:0;">0.0 °</div>
<svg class="a" style="left:510px;top:185px" width="150" height="24" viewBox="510 185 150 24">
<g fill="none" stroke="#111" stroke-width="1.3">
<path d="M518.6,201.2 A6.3,6.3 0 1 0 516.9,195.3"/>
<path d="M653.4,201.5 A6.3,6.3 0 1 1 655.1,195.6"/>
</g>
<path d="M514.2,195.2 L519.8,195.2 L517,199.2 Z" fill="#111"/>
<path d="M652.4,195.5 L658,195.5 L655.2,199.5 Z" fill="#111"/>
</svg>
<div class="t" style="left:511px;top:215.5px;font-size:12px;color:#000;transform:scaleX(0.88);">垂直方向の遠近効果:</div>
<div class="a" style="left:511.5px;top:240.5px;width:1px;height:11px;background:#a8a8a8"></div>
<div class="a" style="left:660px;top:240.5px;width:1px;height:11px;background:#a8a8a8"></div>
<div class="a" style="left:511.5px;top:244.0px;width:148.5px;height:4px;border-top:1px solid #b8b8b8;border-bottom:1px solid #b8b8b8;background:#e6e6e6"></div>
<div class="a" style="left:583px;top:238.0px;width:5px;height:15px;background:#e4e4e4;border:1px solid #b0b0b0"></div>
<div class="spin" style="left:669.5px;top:235px;width:61px;height:21px"></div>
<div class="a" style="left:712.5px;top:236px;width:16px;height:19px;background:#ececec"></div>
<div class="a" style="left:712.5px;top:245.0px;width:16px;height:1px;background:#b0b0b0"></div>
<svg class="a" style="left:714.5px;top:235px" width="12" height="21"><path d="M1.5,8.5 L10.5,8.5 L6,3.0 Z" fill="#111"/><path d="M1.5,12.5 L10.5,12.5 L6,18.0 Z" fill="#111"/></svg>
<div class="t" style="left:673.0px;top:238.5px;font-size:12.5px;color:#1a1a1a;transform:scaleX(1.0);-webkit-text-stroke:0;">0.0</div>
<svg class="a" style="left:510px;top:258px" width="150" height="22" viewBox="510 258 150 22">
<g fill="none" stroke="#111" stroke-width="1.2">
<path d="M514.5,263.5 L528.5,263.5 L526,276 L517,276 Z"/>
<line x1="515.5" y1="268" x2="527.5" y2="268"/><line x1="516.3" y1="272" x2="526.7" y2="272"/>
<line x1="519" y1="263.5" x2="520" y2="276"/><line x1="524" y1="263.5" x2="523" y2="276"/>
<path d="M645,262.5 L654,262.5 L657,275.5 L642,275.5 Z"/>
<line x1="644" y1="267" x2="655" y2="267"/><line x1="643" y1="271" x2="656" y2="271"/>
<line x1="648" y1="262.5" x2="647" y2="275.5"/><line x1="651" y1="262.5" x2="652" y2="275.5"/>
</g>
<circle cx="521.5" cy="265" r="1.8" fill="#fff" stroke="#111" stroke-width="1"/>
<circle cx="649.5" cy="274.5" r="1.8" fill="#fff" stroke="#111" stroke-width="1"/>
</svg>
<div class="t" style="left:511px;top:288.5px;font-size:12px;color:#000;transform:scaleX(0.88);">水平方向の遠近効果:</div>
<div class="a" style="left:511.5px;top:314.5px;width:1px;height:11px;background:#a8a8a8"></div>
<div class="a" style="left:660px;top:314.5px;width:1px;height:11px;background:#a8a8a8"></div>
<div class="a" style="left:511.5px;top:318.0px;width:148.5px;height:4px;border-top:1px solid #b8b8b8;border-bottom:1px solid #b8b8b8;background:#e6e6e6"></div>
<div class="a" style="left:583px;top:312.0px;width:5px;height:15px;background:#e4e4e4;border:1px solid #b0b0b0"></div>
<div class="spin" style="left:669.5px;top:308.5px;width:61px;height:21px"></div>
<div class="a" style="left:712.5px;top:309.5px;width:16px;height:19px;background:#ececec"></div>
<div class="a" style="left:712.5px;top:318.5px;width:16px;height:1px;background:#b0b0b0"></div>
<svg class="a" style="left:714.5px;top:308.5px" width="12" height="21"><path d="M1.5,8.5 L10.5,8.5 L6,3.0 Z" fill="#111"/><path d="M1.5,12.5 L10.5,12.5 L6,18.0 Z" fill="#111"/></svg>
<div class="t" style="left:673.0px;top:312.0px;font-size:12.5px;color:#1a1a1a;transform:scaleX(1.0);-webkit-text-stroke:0;">0.0</div>
<svg class="a" style="left:510px;top:332px" width="150" height="22" viewBox="510 332 150 22">
<g fill="none" stroke="#111" stroke-width="1.2">
<path d="M514.5,339.5 L528,336.5 L528,350.5 L514.5,347.5 Z"/>
<line x1="514.5" y1="343.5" x2="528" y2="343.5"/><line x1="519" y1="338.5" x2="519" y2="348.5"/><line x1="523.5" y1="337.5" x2="523.5" y2="349.5"/>
<path d="M642.5,336.5 L656.5,339.5 L656.5,347.5 L642.5,350.5 Z"/>
<line x1="642.5" y1="343.5" x2="656.5" y2="343.5"/><line x1="647" y1="337.5" x2="647" y2="349.5"/><line x1="652" y1="338.5" x2="652" y2="348.5"/>
</g>
<circle cx="527" cy="343.5" r="1.8" fill="#fff" stroke="#111" stroke-width="1"/>
<circle cx="643.5" cy="343.5" r="1.8" fill="#fff" stroke="#111" stroke-width="1"/>
</svg>
<div class="chk" style="left:511px;top:365.5px;width:11px;height:11px;border-color:#333"></div>
<svg class="a" style="left:511px;top:365.5px" width="11" height="11"><path d="M1.8,5.4 L4.3,8 L9,2.6" fill="none" stroke="#000" stroke-width="2"/></svg>
<div class="t" style="left:525.5px;top:364px;font-size:12px;color:#000;transform:scaleX(0.76);">イメージの切り抜き(<u>C</u>)</div>
<div class="chk" style="left:527px;top:382.5px;width:11px;height:11px;border-color:#8a8a8a"></div>
<div class="t" style="left:541px;top:381px;font-size:12px;color:#000;transform:scaleX(0.737);">オリジナル サイズに合わせた切り抜きとリサンプル(<u>S</u>)</div>
<div class="a" style="left:502px;top:429px;width:285px;height:98px;border:1px solid #b8b8b8;box-shadow:inset 1px 1px 0 #fff,1px 1px 0 #fff"></div>
<div class="a" style="left:509px;top:437px;width:268px;height:83px;border:1px solid #b4b4b4;box-shadow:inset 1px 1px 0 #fff,1px 1px 0 #fff"></div>
<div class="a" style="left:516px;top:430px;width:30px;height:12px;background:#f3f3f3"></div>
<div class="t" style="left:519px;top:430px;font-size:12px;color:#000;transform:scaleX(0.64);">ヒント</div>
<div class="t" style="left:515px;top:445.3px;font-size:12px;color:#000;transform:scaleX(0.75);">[イメージの回転] スライダを左へ動かすとイメージが左回りに</div>
<div class="t" style="left:515px;top:459px;font-size:12px;color:#000;transform:scaleX(0.77);">回転し、右へ動かすとイメージが右回りに回転します。 結果</div>
<div class="t" style="left:515px;top:472.4px;font-size:12px;color:#000;transform:scaleX(0.712);">のプレビューの見栄えを良くするには、最初にグリッド線のカラー</div>
<div class="t" style="left:515px;top:485.5px;font-size:12px;color:#000;transform:scaleX(0.75);">および間隔を調整しておくことをお勧めします。</div>
<div class="a" style="left:502px;top:533px;width:285px;height:12px;background:#e6e6e6;border:1px solid #bcbcbc"></div>
<div class="btn" style="left:21px;top:554px;width:72px;height:25px"></div>
<div class="t" style="left:33px;top:559.5px;font-size:12px;color:#000;transform:scaleX(0.75);">リセット(<u>R</u>)</div>
<div class="btn" style="left:543.5px;top:554px;width:72.5px;height:25px"></div>
<div class="t" style="left:572px;top:559.5px;font-size:12px;color:#000;transform:scaleX(0.95);-webkit-text-stroke:0;font-size:12.5px;">OK</div>
<div class="btn" style="left:625px;top:554px;width:73px;height:25px"></div>
<div class="t" style="left:639.5px;top:559.5px;font-size:12px;color:#000;transform:scaleX(0.73);">キャンセル</div>
<div class="btn" style="left:707px;top:554px;width:73px;height:25px"></div>
<div class="t" style="left:729.5px;top:559.5px;font-size:12px;color:#000;transform:scaleX(0.75);">ヘルプ</div></body></html>
